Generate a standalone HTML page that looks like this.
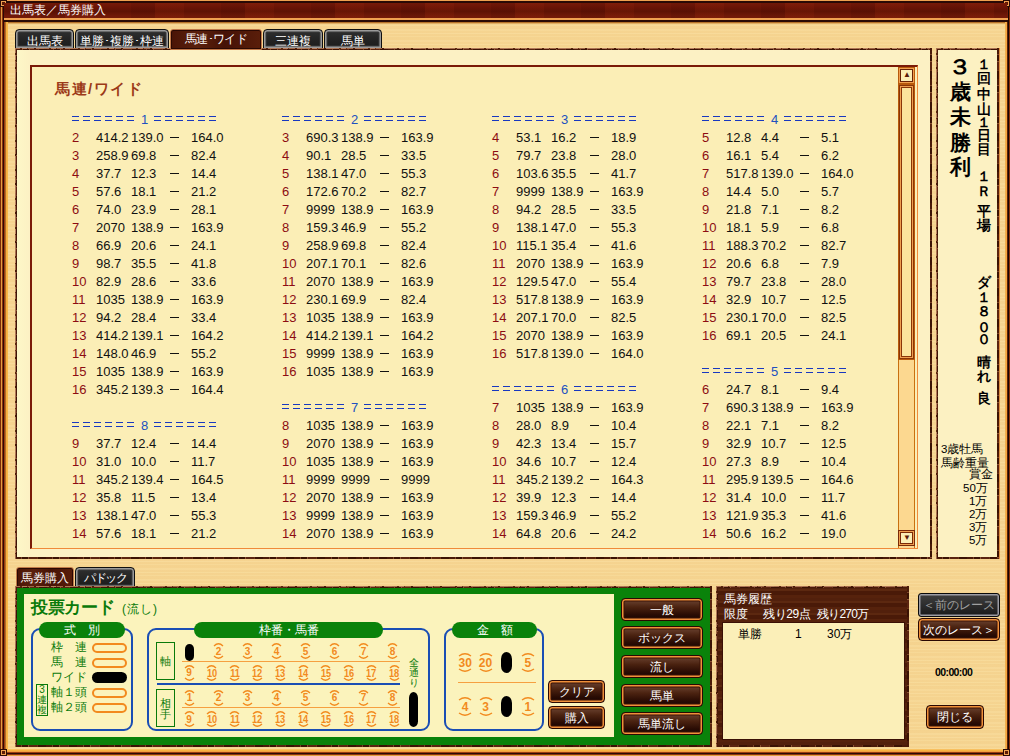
<!DOCTYPE html><html><head><meta charset="utf-8"><style>
*{margin:0;padding:0;box-sizing:border-box}
html,body{width:1010px;height:756px;overflow:hidden}
body{position:relative;font-family:"Liberation Sans",sans-serif;font-size:12px;background:#F6D48E}
.a{position:absolute}
.wood{background:
 repeating-linear-gradient(180deg, rgba(255,240,185,.20) 0 1px, rgba(236,196,120,.10) 1px 3px, rgba(255,236,175,.16) 3px 4px, rgba(234,192,115,.10) 4px 7px, rgba(255,242,190,.12) 7px 9px, rgba(238,198,122,.08) 9px 11px),
 #F6D592}
.tx{white-space:pre;line-height:1}
.t13{font-size:13px}
.tabs{background:linear-gradient(#303030,#222 60%,#1c1c1c);border:1px solid #101010;box-shadow:inset 0 0 0 1.5px #9a9a9a, inset 0 0 0 2.5px #3a3a3a;border-radius:4px 4px 0 0;color:#fff}
.taba{background:linear-gradient(90deg,#4a1406,#5a200c 30%,#461206 60%,#5a1e0a);border:1px solid #c07848;box-shadow:inset 0 0 0 1px #2a0802;border-radius:3px 3px 0 0;color:#fff}
.rough{border:2px solid #5a2a12}
.btn{background:linear-gradient(180deg,#6e4634 0%,#4a2210 40%,#2a0c04 75%,#160402 100%);border:1px solid #2a0802;box-shadow:inset 0 0 0 1.5px #f0903a, inset 0 0 0 2.5px #3a1206;border-radius:4px;color:#fff}
.g{color:#0a780a}
</style></head><body>
<div class="a wood" style="left:0;top:0;width:1010px;height:756px"></div>
<div class="a" style="left:0px;top:0px;width:1010px;height:24px;background:linear-gradient(180deg,#F0A050 0,#F0A050 1px,#2a0a05 1px,#2a0a05 3px,#7a1c08 3px,#6e1606 10px,#7a1e08 18px,#F0A050 18px,#F0A050 20px,#2a0a05 20px,#2a0a05 22px,#a85e1a 22px,#c88838 23px,#F6D592 24px)"></div>
<div class="a" style="left:0px;top:6px;width:1px;height:750px;background:#7a2a0a"></div>
<div class="a" style="left:1px;top:6px;width:1px;height:750px;background:#e0a040"></div>
<div class="a" style="left:2px;top:6px;width:1px;height:750px;background:#8b3010"></div>
<div class="a" style="left:3px;top:6px;width:1px;height:750px;background:#2a0a05"></div>
<div class="a" style="left:4px;top:22px;width:1px;height:734px;background:#9a3a10"></div>
<div class="a" style="left:5px;top:22px;width:1px;height:734px;background:#b07028"></div>
<div class="a" style="left:6px;top:22px;width:1px;height:734px;background:#f8b040"></div>
<div class="a" style="left:7px;top:22px;width:1px;height:734px;background:#f8b848"></div>
<div class="a" style="left:1009px;top:7px;width:1px;height:749px;background:#8a3008"></div>
<div class="a" style="left:1008px;top:7px;width:1px;height:749px;background:#1a0602"></div>
<div class="a" style="left:1007px;top:22px;width:1px;height:734px;background:#5a2008"></div>
<div class="a" style="left:1006px;top:22px;width:1px;height:734px;background:#f8a840"></div>
<div class="a" style="left:1005px;top:22px;width:1px;height:734px;background:#f0b050"></div>
<div class="a" style="left:0px;top:749px;width:1010px;height:1px;background:#f8c060"></div>
<div class="a" style="left:0px;top:750px;width:1010px;height:1px;background:#f8b040"></div>
<div class="a" style="left:0px;top:751px;width:1010px;height:1px;background:#f0a040"></div>
<div class="a" style="left:0px;top:752px;width:1010px;height:1px;background:#9a3a10"></div>
<div class="a" style="left:0px;top:753px;width:1010px;height:1px;background:#2a0a05"></div>
<div class="a" style="left:0px;top:754px;width:1010px;height:1px;background:#8b3010"></div>
<div class="a" style="left:0px;top:755px;width:1010px;height:1px;background:#e0a040"></div>
<div class="a" style="left:0px;top:0px;width:7px;height:7px;background:#5a1a06;border:1px solid #2a0a05;box-shadow:inset 0 0 0 1px #f0a050"></div>
<div class="a" style="left:1003px;top:0px;width:7px;height:7px;background:#5a1a06;border:1px solid #2a0a05;box-shadow:inset 0 0 0 1px #f0a050"></div>
<div class="a" style="left:0px;top:749px;width:7px;height:7px;background:#5a1a06;border:1px solid #2a0a05;box-shadow:inset 0 0 0 1px #f0a050"></div>
<div class="a" style="left:1003px;top:749px;width:7px;height:7px;background:#5a1a06;border:1px solid #2a0a05;box-shadow:inset 0 0 0 1px #f0a050"></div>
<div class="a" style="left:4px;top:3px;width:1003px;height:15px;background:repeating-linear-gradient(90deg,rgba(0,0,0,0) 0 37px,rgba(40,0,0,.10) 37px 61px,rgba(255,80,20,.06) 61px 90px),linear-gradient(180deg,#781a08,#6a1406 30%,#5e1204 55%,#701808 85%,#741a08)"></div>
<div class="a tx" style="left:10px;top:4px;color:#fff;font-size:12px">出馬表／馬券購入</div>
<div class="a tabs" style="left:15px;top:29px;width:59px;height:20px"><div class="tx" style="position:absolute;left:0;right:0;top:5px;text-align:center;font-size:12px">出馬表</div></div>
<div class="a tabs" style="left:75px;top:29px;width:94px;height:20px"><div class="tx" style="position:absolute;left:0;right:0;top:5px;text-align:center;font-size:12px">単勝･複勝･枠連</div></div>
<div class="a tabs" style="left:263px;top:29px;width:60px;height:20px"><div class="tx" style="position:absolute;left:0;right:0;top:5px;text-align:center;font-size:12px">三連複</div></div>
<div class="a tabs" style="left:324px;top:29px;width:58px;height:20px"><div class="tx" style="position:absolute;left:0;right:0;top:5px;text-align:center;font-size:12px">馬単</div></div>
<div class="a" style="left:15px;top:48px;width:917px;height:511px;background:linear-gradient(90deg,#FDF8C8 0,#FCF1C4 14px);"></div>
<div class="a" style="left:15px;top:48px;width:917px;height:1px;background:repeating-linear-gradient(90deg,#a87050 0 5px,#5a2a10 5px 7px,#b88060 7px 12px,#6a3418 12px 13px,#a06848 13px 19px,#4a1a08 19px 21px,#b07858 21px 29px)"></div>
<div class="a" style="left:16px;top:49px;width:915px;height:1px;background:repeating-linear-gradient(90deg,#4a1a08 0 6px,#7a4428 6px 7px,#3a1204 7px 13px,#8a5434 13px 14px,#5a2410 14px 22px,#6a3418 22px 23px,#3a1204 23px 31px)"></div>
<div class="a" style="left:15px;top:557px;width:917px;height:2px;background:repeating-linear-gradient(90deg,#4a1a08 0 6px,#7a4428 6px 7px,#3a1204 7px 13px,#8a5434 13px 14px,#5a2410 14px 22px,#6a3418 22px 23px,#3a1204 23px 31px)"></div>
<div class="a" style="left:15px;top:48px;width:1px;height:511px;background:repeating-linear-gradient(180deg,#a87050 0 5px,#5a2a10 5px 7px,#b88060 7px 12px,#6a3418 12px 13px,#a06848 13px 19px,#4a1a08 19px 21px,#b07858 21px 29px)"></div>
<div class="a" style="left:16px;top:49px;width:1px;height:509px;background:repeating-linear-gradient(180deg,#4a1a08 0 6px,#7a4428 6px 7px,#3a1204 7px 13px,#8a5434 13px 14px,#5a2410 14px 22px,#6a3418 22px 23px,#3a1204 23px 31px)"></div>
<div class="a" style="left:930px;top:48px;width:2px;height:511px;background:repeating-linear-gradient(180deg,#4a1a08 0 6px,#7a4428 6px 7px,#3a1204 7px 13px,#8a5434 13px 14px,#5a2410 14px 22px,#6a3418 22px 23px,#3a1204 23px 31px)"></div>
<div class="a" style="left:30px;top:65px;width:888px;height:484px;background:#FBEEB6;border-left:2px solid #7a1a08;border-top:2px solid #7a1a08;border-bottom:1px solid #f08a3a;border-right:1px solid #f08a3a"></div>
<div class="a tx" style="left:55px;top:81px;color:#9c3a18;font-size:15px;font-weight:bold;letter-spacing:1.5px">馬連/ワイド</div>
<div class="a taba" style="left:170px;top:29px;width:92px;height:21px"><div class="tx" style="position:absolute;left:0;right:0;top:3px;text-align:center;font-size:12px;letter-spacing:-0.6px">馬連･ワイド</div></div>
<div class="a" style="left:898px;top:67px;width:17px;height:481px;background:#FCD890;border-left:1px solid #c87010;border-right:1px solid #c87010"></div>
<div class="a" style="left:898px;top:67px;width:17px;height:17px;background:#b85a0c"></div>
<div class="a" style="left:900px;top:69px;width:13px;height:13px;background:#FBEEB6;border:1px solid #6a2206;box-shadow:0 0 0 1px #f0a050"></div>
<div class="a" style="left:898px;top:84px;width:17px;height:276px;background:#b85a0c"></div>
<div class="a" style="left:899px;top:85px;width:15px;height:274px;background:#FCE49C;border:1px solid #8a3608;box-shadow:inset 0 0 0 1px #f0a050, inset 0 0 0 2px #8a3608"></div>
<div class="a" style="left:898px;top:530px;width:17px;height:16px;background:#7a2a08"></div>
<div class="a" style="left:900px;top:532px;width:13px;height:12px;background:#FBEEB6;border:1px solid #7a2a08;box-shadow:0 0 0 1px #f0a050"></div>
<div class="a tx" style="left:903px;top:71px;font-size:8px;color:#5a1a08">▲</div>
<div class="a tx" style="left:903px;top:534px;font-size:8px;color:#5a1a08">▼</div>
<div class="a" style="left:32px;top:67px;width:865px;height:480px;overflow:hidden">
<div class="a" style="left:40px;top:49.0px;width:7px;height:5px;border-top:1px solid #1838c0;border-bottom:1px solid #1838c0"></div>
<div class="a" style="left:121.5px;top:49.0px;width:7px;height:5px;border-top:1px solid #1838c0;border-bottom:1px solid #1838c0"></div>
<div class="a" style="left:51px;top:49.0px;width:7px;height:5px;border-top:1px solid #1838c0;border-bottom:1px solid #1838c0"></div>
<div class="a" style="left:132.5px;top:49.0px;width:7px;height:5px;border-top:1px solid #1838c0;border-bottom:1px solid #1838c0"></div>
<div class="a" style="left:62px;top:49.0px;width:7px;height:5px;border-top:1px solid #1838c0;border-bottom:1px solid #1838c0"></div>
<div class="a" style="left:143.5px;top:49.0px;width:7px;height:5px;border-top:1px solid #1838c0;border-bottom:1px solid #1838c0"></div>
<div class="a" style="left:73px;top:49.0px;width:7px;height:5px;border-top:1px solid #1838c0;border-bottom:1px solid #1838c0"></div>
<div class="a" style="left:154.5px;top:49.0px;width:7px;height:5px;border-top:1px solid #1838c0;border-bottom:1px solid #1838c0"></div>
<div class="a" style="left:84px;top:49.0px;width:7px;height:5px;border-top:1px solid #1838c0;border-bottom:1px solid #1838c0"></div>
<div class="a" style="left:165.5px;top:49.0px;width:7px;height:5px;border-top:1px solid #1838c0;border-bottom:1px solid #1838c0"></div>
<div class="a" style="left:95px;top:49.0px;width:7px;height:5px;border-top:1px solid #1838c0;border-bottom:1px solid #1838c0"></div>
<div class="a" style="left:176.5px;top:49.0px;width:7px;height:5px;border-top:1px solid #1838c0;border-bottom:1px solid #1838c0"></div>
<div class="a tx" style="left:109px;top:45.5px;color:#2050c0;font-size:13px">1</div>
<div class="a tx t13" style="left:40px;top:63.5px;color:#8c0c12">2</div>
<div class="a tx t13" style="left:64px;top:63.5px;color:#111">414.2</div>
<div class="a tx t13" style="left:99px;top:63.5px;color:#111">139.0</div>
<div class="a" style="left:138px;top:69.5px;width:9px;height:1px;background:#111"></div>
<div class="a tx t13" style="left:159px;top:63.5px;color:#111">164.0</div>
<div class="a tx t13" style="left:40px;top:81.5px;color:#8c0c12">3</div>
<div class="a tx t13" style="left:64px;top:81.5px;color:#111">258.9</div>
<div class="a tx t13" style="left:99px;top:81.5px;color:#111">69.8</div>
<div class="a" style="left:138px;top:87.5px;width:9px;height:1px;background:#111"></div>
<div class="a tx t13" style="left:159px;top:81.5px;color:#111">82.4</div>
<div class="a tx t13" style="left:40px;top:99.5px;color:#8c0c12">4</div>
<div class="a tx t13" style="left:64px;top:99.5px;color:#111">37.7</div>
<div class="a tx t13" style="left:99px;top:99.5px;color:#111">12.3</div>
<div class="a" style="left:138px;top:105.5px;width:9px;height:1px;background:#111"></div>
<div class="a tx t13" style="left:159px;top:99.5px;color:#111">14.4</div>
<div class="a tx t13" style="left:40px;top:117.5px;color:#8c0c12">5</div>
<div class="a tx t13" style="left:64px;top:117.5px;color:#111">57.6</div>
<div class="a tx t13" style="left:99px;top:117.5px;color:#111">18.1</div>
<div class="a" style="left:138px;top:123.5px;width:9px;height:1px;background:#111"></div>
<div class="a tx t13" style="left:159px;top:117.5px;color:#111">21.2</div>
<div class="a tx t13" style="left:40px;top:135.5px;color:#8c0c12">6</div>
<div class="a tx t13" style="left:64px;top:135.5px;color:#111">74.0</div>
<div class="a tx t13" style="left:99px;top:135.5px;color:#111">23.9</div>
<div class="a" style="left:138px;top:141.5px;width:9px;height:1px;background:#111"></div>
<div class="a tx t13" style="left:159px;top:135.5px;color:#111">28.1</div>
<div class="a tx t13" style="left:40px;top:153.5px;color:#8c0c12">7</div>
<div class="a tx t13" style="left:64px;top:153.5px;color:#111">2070</div>
<div class="a tx t13" style="left:99px;top:153.5px;color:#111">138.9</div>
<div class="a" style="left:138px;top:159.5px;width:9px;height:1px;background:#111"></div>
<div class="a tx t13" style="left:159px;top:153.5px;color:#111">163.9</div>
<div class="a tx t13" style="left:40px;top:171.5px;color:#8c0c12">8</div>
<div class="a tx t13" style="left:64px;top:171.5px;color:#111">66.9</div>
<div class="a tx t13" style="left:99px;top:171.5px;color:#111">20.6</div>
<div class="a" style="left:138px;top:177.5px;width:9px;height:1px;background:#111"></div>
<div class="a tx t13" style="left:159px;top:171.5px;color:#111">24.1</div>
<div class="a tx t13" style="left:40px;top:189.5px;color:#8c0c12">9</div>
<div class="a tx t13" style="left:64px;top:189.5px;color:#111">98.7</div>
<div class="a tx t13" style="left:99px;top:189.5px;color:#111">35.5</div>
<div class="a" style="left:138px;top:195.5px;width:9px;height:1px;background:#111"></div>
<div class="a tx t13" style="left:159px;top:189.5px;color:#111">41.8</div>
<div class="a tx t13" style="left:40px;top:207.5px;color:#8c0c12">10</div>
<div class="a tx t13" style="left:64px;top:207.5px;color:#111">82.9</div>
<div class="a tx t13" style="left:99px;top:207.5px;color:#111">28.6</div>
<div class="a" style="left:138px;top:213.5px;width:9px;height:1px;background:#111"></div>
<div class="a tx t13" style="left:159px;top:207.5px;color:#111">33.6</div>
<div class="a tx t13" style="left:40px;top:225.5px;color:#8c0c12">11</div>
<div class="a tx t13" style="left:64px;top:225.5px;color:#111">1035</div>
<div class="a tx t13" style="left:99px;top:225.5px;color:#111">138.9</div>
<div class="a" style="left:138px;top:231.5px;width:9px;height:1px;background:#111"></div>
<div class="a tx t13" style="left:159px;top:225.5px;color:#111">163.9</div>
<div class="a tx t13" style="left:40px;top:243.5px;color:#8c0c12">12</div>
<div class="a tx t13" style="left:64px;top:243.5px;color:#111">94.2</div>
<div class="a tx t13" style="left:99px;top:243.5px;color:#111">28.4</div>
<div class="a" style="left:138px;top:249.5px;width:9px;height:1px;background:#111"></div>
<div class="a tx t13" style="left:159px;top:243.5px;color:#111">33.4</div>
<div class="a tx t13" style="left:40px;top:261.5px;color:#8c0c12">13</div>
<div class="a tx t13" style="left:64px;top:261.5px;color:#111">414.2</div>
<div class="a tx t13" style="left:99px;top:261.5px;color:#111">139.1</div>
<div class="a" style="left:138px;top:267.5px;width:9px;height:1px;background:#111"></div>
<div class="a tx t13" style="left:159px;top:261.5px;color:#111">164.2</div>
<div class="a tx t13" style="left:40px;top:279.5px;color:#8c0c12">14</div>
<div class="a tx t13" style="left:64px;top:279.5px;color:#111">148.0</div>
<div class="a tx t13" style="left:99px;top:279.5px;color:#111">46.9</div>
<div class="a" style="left:138px;top:285.5px;width:9px;height:1px;background:#111"></div>
<div class="a tx t13" style="left:159px;top:279.5px;color:#111">55.2</div>
<div class="a tx t13" style="left:40px;top:297.5px;color:#8c0c12">15</div>
<div class="a tx t13" style="left:64px;top:297.5px;color:#111">1035</div>
<div class="a tx t13" style="left:99px;top:297.5px;color:#111">138.9</div>
<div class="a" style="left:138px;top:303.5px;width:9px;height:1px;background:#111"></div>
<div class="a tx t13" style="left:159px;top:297.5px;color:#111">163.9</div>
<div class="a tx t13" style="left:40px;top:315.5px;color:#8c0c12">16</div>
<div class="a tx t13" style="left:64px;top:315.5px;color:#111">345.2</div>
<div class="a tx t13" style="left:99px;top:315.5px;color:#111">139.3</div>
<div class="a" style="left:138px;top:321.5px;width:9px;height:1px;background:#111"></div>
<div class="a tx t13" style="left:159px;top:315.5px;color:#111">164.4</div>
<div class="a" style="left:40px;top:355.0px;width:7px;height:5px;border-top:1px solid #1838c0;border-bottom:1px solid #1838c0"></div>
<div class="a" style="left:121.5px;top:355.0px;width:7px;height:5px;border-top:1px solid #1838c0;border-bottom:1px solid #1838c0"></div>
<div class="a" style="left:51px;top:355.0px;width:7px;height:5px;border-top:1px solid #1838c0;border-bottom:1px solid #1838c0"></div>
<div class="a" style="left:132.5px;top:355.0px;width:7px;height:5px;border-top:1px solid #1838c0;border-bottom:1px solid #1838c0"></div>
<div class="a" style="left:62px;top:355.0px;width:7px;height:5px;border-top:1px solid #1838c0;border-bottom:1px solid #1838c0"></div>
<div class="a" style="left:143.5px;top:355.0px;width:7px;height:5px;border-top:1px solid #1838c0;border-bottom:1px solid #1838c0"></div>
<div class="a" style="left:73px;top:355.0px;width:7px;height:5px;border-top:1px solid #1838c0;border-bottom:1px solid #1838c0"></div>
<div class="a" style="left:154.5px;top:355.0px;width:7px;height:5px;border-top:1px solid #1838c0;border-bottom:1px solid #1838c0"></div>
<div class="a" style="left:84px;top:355.0px;width:7px;height:5px;border-top:1px solid #1838c0;border-bottom:1px solid #1838c0"></div>
<div class="a" style="left:165.5px;top:355.0px;width:7px;height:5px;border-top:1px solid #1838c0;border-bottom:1px solid #1838c0"></div>
<div class="a" style="left:95px;top:355.0px;width:7px;height:5px;border-top:1px solid #1838c0;border-bottom:1px solid #1838c0"></div>
<div class="a" style="left:176.5px;top:355.0px;width:7px;height:5px;border-top:1px solid #1838c0;border-bottom:1px solid #1838c0"></div>
<div class="a tx" style="left:109px;top:351.5px;color:#2050c0;font-size:13px">8</div>
<div class="a tx t13" style="left:40px;top:369.5px;color:#8c0c12">9</div>
<div class="a tx t13" style="left:64px;top:369.5px;color:#111">37.7</div>
<div class="a tx t13" style="left:99px;top:369.5px;color:#111">12.4</div>
<div class="a" style="left:138px;top:375.5px;width:9px;height:1px;background:#111"></div>
<div class="a tx t13" style="left:159px;top:369.5px;color:#111">14.4</div>
<div class="a tx t13" style="left:40px;top:387.5px;color:#8c0c12">10</div>
<div class="a tx t13" style="left:64px;top:387.5px;color:#111">31.0</div>
<div class="a tx t13" style="left:99px;top:387.5px;color:#111">10.0</div>
<div class="a" style="left:138px;top:393.5px;width:9px;height:1px;background:#111"></div>
<div class="a tx t13" style="left:159px;top:387.5px;color:#111">11.7</div>
<div class="a tx t13" style="left:40px;top:405.5px;color:#8c0c12">11</div>
<div class="a tx t13" style="left:64px;top:405.5px;color:#111">345.2</div>
<div class="a tx t13" style="left:99px;top:405.5px;color:#111">139.4</div>
<div class="a" style="left:138px;top:411.5px;width:9px;height:1px;background:#111"></div>
<div class="a tx t13" style="left:159px;top:405.5px;color:#111">164.5</div>
<div class="a tx t13" style="left:40px;top:423.5px;color:#8c0c12">12</div>
<div class="a tx t13" style="left:64px;top:423.5px;color:#111">35.8</div>
<div class="a tx t13" style="left:99px;top:423.5px;color:#111">11.5</div>
<div class="a" style="left:138px;top:429.5px;width:9px;height:1px;background:#111"></div>
<div class="a tx t13" style="left:159px;top:423.5px;color:#111">13.4</div>
<div class="a tx t13" style="left:40px;top:441.5px;color:#8c0c12">13</div>
<div class="a tx t13" style="left:64px;top:441.5px;color:#111">138.1</div>
<div class="a tx t13" style="left:99px;top:441.5px;color:#111">47.0</div>
<div class="a" style="left:138px;top:447.5px;width:9px;height:1px;background:#111"></div>
<div class="a tx t13" style="left:159px;top:441.5px;color:#111">55.3</div>
<div class="a tx t13" style="left:40px;top:459.5px;color:#8c0c12">14</div>
<div class="a tx t13" style="left:64px;top:459.5px;color:#111">57.6</div>
<div class="a tx t13" style="left:99px;top:459.5px;color:#111">18.1</div>
<div class="a" style="left:138px;top:465.5px;width:9px;height:1px;background:#111"></div>
<div class="a tx t13" style="left:159px;top:459.5px;color:#111">21.2</div>
<div class="a tx t13" style="left:40px;top:477.5px;color:#8c0c12">15</div>
<div class="a tx t13" style="left:64px;top:477.5px;color:#111">414.2</div>
<div class="a tx t13" style="left:99px;top:477.5px;color:#111">139.1</div>
<div class="a" style="left:138px;top:483.5px;width:9px;height:1px;background:#111"></div>
<div class="a tx t13" style="left:159px;top:477.5px;color:#111">164.2</div>
<div class="a" style="left:250px;top:49.0px;width:7px;height:5px;border-top:1px solid #1838c0;border-bottom:1px solid #1838c0"></div>
<div class="a" style="left:331.5px;top:49.0px;width:7px;height:5px;border-top:1px solid #1838c0;border-bottom:1px solid #1838c0"></div>
<div class="a" style="left:261px;top:49.0px;width:7px;height:5px;border-top:1px solid #1838c0;border-bottom:1px solid #1838c0"></div>
<div class="a" style="left:342.5px;top:49.0px;width:7px;height:5px;border-top:1px solid #1838c0;border-bottom:1px solid #1838c0"></div>
<div class="a" style="left:272px;top:49.0px;width:7px;height:5px;border-top:1px solid #1838c0;border-bottom:1px solid #1838c0"></div>
<div class="a" style="left:353.5px;top:49.0px;width:7px;height:5px;border-top:1px solid #1838c0;border-bottom:1px solid #1838c0"></div>
<div class="a" style="left:283px;top:49.0px;width:7px;height:5px;border-top:1px solid #1838c0;border-bottom:1px solid #1838c0"></div>
<div class="a" style="left:364.5px;top:49.0px;width:7px;height:5px;border-top:1px solid #1838c0;border-bottom:1px solid #1838c0"></div>
<div class="a" style="left:294px;top:49.0px;width:7px;height:5px;border-top:1px solid #1838c0;border-bottom:1px solid #1838c0"></div>
<div class="a" style="left:375.5px;top:49.0px;width:7px;height:5px;border-top:1px solid #1838c0;border-bottom:1px solid #1838c0"></div>
<div class="a" style="left:305px;top:49.0px;width:7px;height:5px;border-top:1px solid #1838c0;border-bottom:1px solid #1838c0"></div>
<div class="a" style="left:386.5px;top:49.0px;width:7px;height:5px;border-top:1px solid #1838c0;border-bottom:1px solid #1838c0"></div>
<div class="a tx" style="left:319px;top:45.5px;color:#2050c0;font-size:13px">2</div>
<div class="a tx t13" style="left:250px;top:63.5px;color:#8c0c12">3</div>
<div class="a tx t13" style="left:274px;top:63.5px;color:#111">690.3</div>
<div class="a tx t13" style="left:309px;top:63.5px;color:#111">138.9</div>
<div class="a" style="left:348px;top:69.5px;width:9px;height:1px;background:#111"></div>
<div class="a tx t13" style="left:369px;top:63.5px;color:#111">163.9</div>
<div class="a tx t13" style="left:250px;top:81.5px;color:#8c0c12">4</div>
<div class="a tx t13" style="left:274px;top:81.5px;color:#111">90.1</div>
<div class="a tx t13" style="left:309px;top:81.5px;color:#111">28.5</div>
<div class="a" style="left:348px;top:87.5px;width:9px;height:1px;background:#111"></div>
<div class="a tx t13" style="left:369px;top:81.5px;color:#111">33.5</div>
<div class="a tx t13" style="left:250px;top:99.5px;color:#8c0c12">5</div>
<div class="a tx t13" style="left:274px;top:99.5px;color:#111">138.1</div>
<div class="a tx t13" style="left:309px;top:99.5px;color:#111">47.0</div>
<div class="a" style="left:348px;top:105.5px;width:9px;height:1px;background:#111"></div>
<div class="a tx t13" style="left:369px;top:99.5px;color:#111">55.3</div>
<div class="a tx t13" style="left:250px;top:117.5px;color:#8c0c12">6</div>
<div class="a tx t13" style="left:274px;top:117.5px;color:#111">172.6</div>
<div class="a tx t13" style="left:309px;top:117.5px;color:#111">70.2</div>
<div class="a" style="left:348px;top:123.5px;width:9px;height:1px;background:#111"></div>
<div class="a tx t13" style="left:369px;top:117.5px;color:#111">82.7</div>
<div class="a tx t13" style="left:250px;top:135.5px;color:#8c0c12">7</div>
<div class="a tx t13" style="left:274px;top:135.5px;color:#111">9999</div>
<div class="a tx t13" style="left:309px;top:135.5px;color:#111">138.9</div>
<div class="a" style="left:348px;top:141.5px;width:9px;height:1px;background:#111"></div>
<div class="a tx t13" style="left:369px;top:135.5px;color:#111">163.9</div>
<div class="a tx t13" style="left:250px;top:153.5px;color:#8c0c12">8</div>
<div class="a tx t13" style="left:274px;top:153.5px;color:#111">159.3</div>
<div class="a tx t13" style="left:309px;top:153.5px;color:#111">46.9</div>
<div class="a" style="left:348px;top:159.5px;width:9px;height:1px;background:#111"></div>
<div class="a tx t13" style="left:369px;top:153.5px;color:#111">55.2</div>
<div class="a tx t13" style="left:250px;top:171.5px;color:#8c0c12">9</div>
<div class="a tx t13" style="left:274px;top:171.5px;color:#111">258.9</div>
<div class="a tx t13" style="left:309px;top:171.5px;color:#111">69.8</div>
<div class="a" style="left:348px;top:177.5px;width:9px;height:1px;background:#111"></div>
<div class="a tx t13" style="left:369px;top:171.5px;color:#111">82.4</div>
<div class="a tx t13" style="left:250px;top:189.5px;color:#8c0c12">10</div>
<div class="a tx t13" style="left:274px;top:189.5px;color:#111">207.1</div>
<div class="a tx t13" style="left:309px;top:189.5px;color:#111">70.1</div>
<div class="a" style="left:348px;top:195.5px;width:9px;height:1px;background:#111"></div>
<div class="a tx t13" style="left:369px;top:189.5px;color:#111">82.6</div>
<div class="a tx t13" style="left:250px;top:207.5px;color:#8c0c12">11</div>
<div class="a tx t13" style="left:274px;top:207.5px;color:#111">2070</div>
<div class="a tx t13" style="left:309px;top:207.5px;color:#111">138.9</div>
<div class="a" style="left:348px;top:213.5px;width:9px;height:1px;background:#111"></div>
<div class="a tx t13" style="left:369px;top:207.5px;color:#111">163.9</div>
<div class="a tx t13" style="left:250px;top:225.5px;color:#8c0c12">12</div>
<div class="a tx t13" style="left:274px;top:225.5px;color:#111">230.1</div>
<div class="a tx t13" style="left:309px;top:225.5px;color:#111">69.9</div>
<div class="a" style="left:348px;top:231.5px;width:9px;height:1px;background:#111"></div>
<div class="a tx t13" style="left:369px;top:225.5px;color:#111">82.4</div>
<div class="a tx t13" style="left:250px;top:243.5px;color:#8c0c12">13</div>
<div class="a tx t13" style="left:274px;top:243.5px;color:#111">1035</div>
<div class="a tx t13" style="left:309px;top:243.5px;color:#111">138.9</div>
<div class="a" style="left:348px;top:249.5px;width:9px;height:1px;background:#111"></div>
<div class="a tx t13" style="left:369px;top:243.5px;color:#111">163.9</div>
<div class="a tx t13" style="left:250px;top:261.5px;color:#8c0c12">14</div>
<div class="a tx t13" style="left:274px;top:261.5px;color:#111">414.2</div>
<div class="a tx t13" style="left:309px;top:261.5px;color:#111">139.1</div>
<div class="a" style="left:348px;top:267.5px;width:9px;height:1px;background:#111"></div>
<div class="a tx t13" style="left:369px;top:261.5px;color:#111">164.2</div>
<div class="a tx t13" style="left:250px;top:279.5px;color:#8c0c12">15</div>
<div class="a tx t13" style="left:274px;top:279.5px;color:#111">9999</div>
<div class="a tx t13" style="left:309px;top:279.5px;color:#111">138.9</div>
<div class="a" style="left:348px;top:285.5px;width:9px;height:1px;background:#111"></div>
<div class="a tx t13" style="left:369px;top:279.5px;color:#111">163.9</div>
<div class="a tx t13" style="left:250px;top:297.5px;color:#8c0c12">16</div>
<div class="a tx t13" style="left:274px;top:297.5px;color:#111">1035</div>
<div class="a tx t13" style="left:309px;top:297.5px;color:#111">138.9</div>
<div class="a" style="left:348px;top:303.5px;width:9px;height:1px;background:#111"></div>
<div class="a tx t13" style="left:369px;top:297.5px;color:#111">163.9</div>
<div class="a" style="left:250px;top:337.0px;width:7px;height:5px;border-top:1px solid #1838c0;border-bottom:1px solid #1838c0"></div>
<div class="a" style="left:331.5px;top:337.0px;width:7px;height:5px;border-top:1px solid #1838c0;border-bottom:1px solid #1838c0"></div>
<div class="a" style="left:261px;top:337.0px;width:7px;height:5px;border-top:1px solid #1838c0;border-bottom:1px solid #1838c0"></div>
<div class="a" style="left:342.5px;top:337.0px;width:7px;height:5px;border-top:1px solid #1838c0;border-bottom:1px solid #1838c0"></div>
<div class="a" style="left:272px;top:337.0px;width:7px;height:5px;border-top:1px solid #1838c0;border-bottom:1px solid #1838c0"></div>
<div class="a" style="left:353.5px;top:337.0px;width:7px;height:5px;border-top:1px solid #1838c0;border-bottom:1px solid #1838c0"></div>
<div class="a" style="left:283px;top:337.0px;width:7px;height:5px;border-top:1px solid #1838c0;border-bottom:1px solid #1838c0"></div>
<div class="a" style="left:364.5px;top:337.0px;width:7px;height:5px;border-top:1px solid #1838c0;border-bottom:1px solid #1838c0"></div>
<div class="a" style="left:294px;top:337.0px;width:7px;height:5px;border-top:1px solid #1838c0;border-bottom:1px solid #1838c0"></div>
<div class="a" style="left:375.5px;top:337.0px;width:7px;height:5px;border-top:1px solid #1838c0;border-bottom:1px solid #1838c0"></div>
<div class="a" style="left:305px;top:337.0px;width:7px;height:5px;border-top:1px solid #1838c0;border-bottom:1px solid #1838c0"></div>
<div class="a" style="left:386.5px;top:337.0px;width:7px;height:5px;border-top:1px solid #1838c0;border-bottom:1px solid #1838c0"></div>
<div class="a tx" style="left:319px;top:333.5px;color:#2050c0;font-size:13px">7</div>
<div class="a tx t13" style="left:250px;top:351.5px;color:#8c0c12">8</div>
<div class="a tx t13" style="left:274px;top:351.5px;color:#111">1035</div>
<div class="a tx t13" style="left:309px;top:351.5px;color:#111">138.9</div>
<div class="a" style="left:348px;top:357.5px;width:9px;height:1px;background:#111"></div>
<div class="a tx t13" style="left:369px;top:351.5px;color:#111">163.9</div>
<div class="a tx t13" style="left:250px;top:369.5px;color:#8c0c12">9</div>
<div class="a tx t13" style="left:274px;top:369.5px;color:#111">2070</div>
<div class="a tx t13" style="left:309px;top:369.5px;color:#111">138.9</div>
<div class="a" style="left:348px;top:375.5px;width:9px;height:1px;background:#111"></div>
<div class="a tx t13" style="left:369px;top:369.5px;color:#111">163.9</div>
<div class="a tx t13" style="left:250px;top:387.5px;color:#8c0c12">10</div>
<div class="a tx t13" style="left:274px;top:387.5px;color:#111">1035</div>
<div class="a tx t13" style="left:309px;top:387.5px;color:#111">138.9</div>
<div class="a" style="left:348px;top:393.5px;width:9px;height:1px;background:#111"></div>
<div class="a tx t13" style="left:369px;top:387.5px;color:#111">163.9</div>
<div class="a tx t13" style="left:250px;top:405.5px;color:#8c0c12">11</div>
<div class="a tx t13" style="left:274px;top:405.5px;color:#111">9999</div>
<div class="a tx t13" style="left:309px;top:405.5px;color:#111">9999</div>
<div class="a" style="left:348px;top:411.5px;width:9px;height:1px;background:#111"></div>
<div class="a tx t13" style="left:369px;top:405.5px;color:#111">9999</div>
<div class="a tx t13" style="left:250px;top:423.5px;color:#8c0c12">12</div>
<div class="a tx t13" style="left:274px;top:423.5px;color:#111">2070</div>
<div class="a tx t13" style="left:309px;top:423.5px;color:#111">138.9</div>
<div class="a" style="left:348px;top:429.5px;width:9px;height:1px;background:#111"></div>
<div class="a tx t13" style="left:369px;top:423.5px;color:#111">163.9</div>
<div class="a tx t13" style="left:250px;top:441.5px;color:#8c0c12">13</div>
<div class="a tx t13" style="left:274px;top:441.5px;color:#111">9999</div>
<div class="a tx t13" style="left:309px;top:441.5px;color:#111">138.9</div>
<div class="a" style="left:348px;top:447.5px;width:9px;height:1px;background:#111"></div>
<div class="a tx t13" style="left:369px;top:441.5px;color:#111">163.9</div>
<div class="a tx t13" style="left:250px;top:459.5px;color:#8c0c12">14</div>
<div class="a tx t13" style="left:274px;top:459.5px;color:#111">2070</div>
<div class="a tx t13" style="left:309px;top:459.5px;color:#111">138.9</div>
<div class="a" style="left:348px;top:465.5px;width:9px;height:1px;background:#111"></div>
<div class="a tx t13" style="left:369px;top:459.5px;color:#111">163.9</div>
<div class="a tx t13" style="left:250px;top:477.5px;color:#8c0c12">15</div>
<div class="a tx t13" style="left:274px;top:477.5px;color:#111">9999</div>
<div class="a tx t13" style="left:309px;top:477.5px;color:#111">9999</div>
<div class="a" style="left:348px;top:483.5px;width:9px;height:1px;background:#111"></div>
<div class="a tx t13" style="left:369px;top:477.5px;color:#111">9999</div>
<div class="a" style="left:460px;top:49.0px;width:7px;height:5px;border-top:1px solid #1838c0;border-bottom:1px solid #1838c0"></div>
<div class="a" style="left:541.5px;top:49.0px;width:7px;height:5px;border-top:1px solid #1838c0;border-bottom:1px solid #1838c0"></div>
<div class="a" style="left:471px;top:49.0px;width:7px;height:5px;border-top:1px solid #1838c0;border-bottom:1px solid #1838c0"></div>
<div class="a" style="left:552.5px;top:49.0px;width:7px;height:5px;border-top:1px solid #1838c0;border-bottom:1px solid #1838c0"></div>
<div class="a" style="left:482px;top:49.0px;width:7px;height:5px;border-top:1px solid #1838c0;border-bottom:1px solid #1838c0"></div>
<div class="a" style="left:563.5px;top:49.0px;width:7px;height:5px;border-top:1px solid #1838c0;border-bottom:1px solid #1838c0"></div>
<div class="a" style="left:493px;top:49.0px;width:7px;height:5px;border-top:1px solid #1838c0;border-bottom:1px solid #1838c0"></div>
<div class="a" style="left:574.5px;top:49.0px;width:7px;height:5px;border-top:1px solid #1838c0;border-bottom:1px solid #1838c0"></div>
<div class="a" style="left:504px;top:49.0px;width:7px;height:5px;border-top:1px solid #1838c0;border-bottom:1px solid #1838c0"></div>
<div class="a" style="left:585.5px;top:49.0px;width:7px;height:5px;border-top:1px solid #1838c0;border-bottom:1px solid #1838c0"></div>
<div class="a" style="left:515px;top:49.0px;width:7px;height:5px;border-top:1px solid #1838c0;border-bottom:1px solid #1838c0"></div>
<div class="a" style="left:596.5px;top:49.0px;width:7px;height:5px;border-top:1px solid #1838c0;border-bottom:1px solid #1838c0"></div>
<div class="a tx" style="left:529px;top:45.5px;color:#2050c0;font-size:13px">3</div>
<div class="a tx t13" style="left:460px;top:63.5px;color:#8c0c12">4</div>
<div class="a tx t13" style="left:484px;top:63.5px;color:#111">53.1</div>
<div class="a tx t13" style="left:519px;top:63.5px;color:#111">16.2</div>
<div class="a" style="left:558px;top:69.5px;width:9px;height:1px;background:#111"></div>
<div class="a tx t13" style="left:579px;top:63.5px;color:#111">18.9</div>
<div class="a tx t13" style="left:460px;top:81.5px;color:#8c0c12">5</div>
<div class="a tx t13" style="left:484px;top:81.5px;color:#111">79.7</div>
<div class="a tx t13" style="left:519px;top:81.5px;color:#111">23.8</div>
<div class="a" style="left:558px;top:87.5px;width:9px;height:1px;background:#111"></div>
<div class="a tx t13" style="left:579px;top:81.5px;color:#111">28.0</div>
<div class="a tx t13" style="left:460px;top:99.5px;color:#8c0c12">6</div>
<div class="a tx t13" style="left:484px;top:99.5px;color:#111">103.6</div>
<div class="a tx t13" style="left:519px;top:99.5px;color:#111">35.5</div>
<div class="a" style="left:558px;top:105.5px;width:9px;height:1px;background:#111"></div>
<div class="a tx t13" style="left:579px;top:99.5px;color:#111">41.7</div>
<div class="a tx t13" style="left:460px;top:117.5px;color:#8c0c12">7</div>
<div class="a tx t13" style="left:484px;top:117.5px;color:#111">9999</div>
<div class="a tx t13" style="left:519px;top:117.5px;color:#111">138.9</div>
<div class="a" style="left:558px;top:123.5px;width:9px;height:1px;background:#111"></div>
<div class="a tx t13" style="left:579px;top:117.5px;color:#111">163.9</div>
<div class="a tx t13" style="left:460px;top:135.5px;color:#8c0c12">8</div>
<div class="a tx t13" style="left:484px;top:135.5px;color:#111">94.2</div>
<div class="a tx t13" style="left:519px;top:135.5px;color:#111">28.5</div>
<div class="a" style="left:558px;top:141.5px;width:9px;height:1px;background:#111"></div>
<div class="a tx t13" style="left:579px;top:135.5px;color:#111">33.5</div>
<div class="a tx t13" style="left:460px;top:153.5px;color:#8c0c12">9</div>
<div class="a tx t13" style="left:484px;top:153.5px;color:#111">138.1</div>
<div class="a tx t13" style="left:519px;top:153.5px;color:#111">47.0</div>
<div class="a" style="left:558px;top:159.5px;width:9px;height:1px;background:#111"></div>
<div class="a tx t13" style="left:579px;top:153.5px;color:#111">55.3</div>
<div class="a tx t13" style="left:460px;top:171.5px;color:#8c0c12">10</div>
<div class="a tx t13" style="left:484px;top:171.5px;color:#111">115.1</div>
<div class="a tx t13" style="left:519px;top:171.5px;color:#111">35.4</div>
<div class="a" style="left:558px;top:177.5px;width:9px;height:1px;background:#111"></div>
<div class="a tx t13" style="left:579px;top:171.5px;color:#111">41.6</div>
<div class="a tx t13" style="left:460px;top:189.5px;color:#8c0c12">11</div>
<div class="a tx t13" style="left:484px;top:189.5px;color:#111">2070</div>
<div class="a tx t13" style="left:519px;top:189.5px;color:#111">138.9</div>
<div class="a" style="left:558px;top:195.5px;width:9px;height:1px;background:#111"></div>
<div class="a tx t13" style="left:579px;top:189.5px;color:#111">163.9</div>
<div class="a tx t13" style="left:460px;top:207.5px;color:#8c0c12">12</div>
<div class="a tx t13" style="left:484px;top:207.5px;color:#111">129.5</div>
<div class="a tx t13" style="left:519px;top:207.5px;color:#111">47.0</div>
<div class="a" style="left:558px;top:213.5px;width:9px;height:1px;background:#111"></div>
<div class="a tx t13" style="left:579px;top:207.5px;color:#111">55.4</div>
<div class="a tx t13" style="left:460px;top:225.5px;color:#8c0c12">13</div>
<div class="a tx t13" style="left:484px;top:225.5px;color:#111">517.8</div>
<div class="a tx t13" style="left:519px;top:225.5px;color:#111">138.9</div>
<div class="a" style="left:558px;top:231.5px;width:9px;height:1px;background:#111"></div>
<div class="a tx t13" style="left:579px;top:225.5px;color:#111">163.9</div>
<div class="a tx t13" style="left:460px;top:243.5px;color:#8c0c12">14</div>
<div class="a tx t13" style="left:484px;top:243.5px;color:#111">207.1</div>
<div class="a tx t13" style="left:519px;top:243.5px;color:#111">70.0</div>
<div class="a" style="left:558px;top:249.5px;width:9px;height:1px;background:#111"></div>
<div class="a tx t13" style="left:579px;top:243.5px;color:#111">82.5</div>
<div class="a tx t13" style="left:460px;top:261.5px;color:#8c0c12">15</div>
<div class="a tx t13" style="left:484px;top:261.5px;color:#111">2070</div>
<div class="a tx t13" style="left:519px;top:261.5px;color:#111">138.9</div>
<div class="a" style="left:558px;top:267.5px;width:9px;height:1px;background:#111"></div>
<div class="a tx t13" style="left:579px;top:261.5px;color:#111">163.9</div>
<div class="a tx t13" style="left:460px;top:279.5px;color:#8c0c12">16</div>
<div class="a tx t13" style="left:484px;top:279.5px;color:#111">517.8</div>
<div class="a tx t13" style="left:519px;top:279.5px;color:#111">139.0</div>
<div class="a" style="left:558px;top:285.5px;width:9px;height:1px;background:#111"></div>
<div class="a tx t13" style="left:579px;top:279.5px;color:#111">164.0</div>
<div class="a" style="left:460px;top:319.0px;width:7px;height:5px;border-top:1px solid #1838c0;border-bottom:1px solid #1838c0"></div>
<div class="a" style="left:541.5px;top:319.0px;width:7px;height:5px;border-top:1px solid #1838c0;border-bottom:1px solid #1838c0"></div>
<div class="a" style="left:471px;top:319.0px;width:7px;height:5px;border-top:1px solid #1838c0;border-bottom:1px solid #1838c0"></div>
<div class="a" style="left:552.5px;top:319.0px;width:7px;height:5px;border-top:1px solid #1838c0;border-bottom:1px solid #1838c0"></div>
<div class="a" style="left:482px;top:319.0px;width:7px;height:5px;border-top:1px solid #1838c0;border-bottom:1px solid #1838c0"></div>
<div class="a" style="left:563.5px;top:319.0px;width:7px;height:5px;border-top:1px solid #1838c0;border-bottom:1px solid #1838c0"></div>
<div class="a" style="left:493px;top:319.0px;width:7px;height:5px;border-top:1px solid #1838c0;border-bottom:1px solid #1838c0"></div>
<div class="a" style="left:574.5px;top:319.0px;width:7px;height:5px;border-top:1px solid #1838c0;border-bottom:1px solid #1838c0"></div>
<div class="a" style="left:504px;top:319.0px;width:7px;height:5px;border-top:1px solid #1838c0;border-bottom:1px solid #1838c0"></div>
<div class="a" style="left:585.5px;top:319.0px;width:7px;height:5px;border-top:1px solid #1838c0;border-bottom:1px solid #1838c0"></div>
<div class="a" style="left:515px;top:319.0px;width:7px;height:5px;border-top:1px solid #1838c0;border-bottom:1px solid #1838c0"></div>
<div class="a" style="left:596.5px;top:319.0px;width:7px;height:5px;border-top:1px solid #1838c0;border-bottom:1px solid #1838c0"></div>
<div class="a tx" style="left:529px;top:315.5px;color:#2050c0;font-size:13px">6</div>
<div class="a tx t13" style="left:460px;top:333.5px;color:#8c0c12">7</div>
<div class="a tx t13" style="left:484px;top:333.5px;color:#111">1035</div>
<div class="a tx t13" style="left:519px;top:333.5px;color:#111">138.9</div>
<div class="a" style="left:558px;top:339.5px;width:9px;height:1px;background:#111"></div>
<div class="a tx t13" style="left:579px;top:333.5px;color:#111">163.9</div>
<div class="a tx t13" style="left:460px;top:351.5px;color:#8c0c12">8</div>
<div class="a tx t13" style="left:484px;top:351.5px;color:#111">28.0</div>
<div class="a tx t13" style="left:519px;top:351.5px;color:#111">8.9</div>
<div class="a" style="left:558px;top:357.5px;width:9px;height:1px;background:#111"></div>
<div class="a tx t13" style="left:579px;top:351.5px;color:#111">10.4</div>
<div class="a tx t13" style="left:460px;top:369.5px;color:#8c0c12">9</div>
<div class="a tx t13" style="left:484px;top:369.5px;color:#111">42.3</div>
<div class="a tx t13" style="left:519px;top:369.5px;color:#111">13.4</div>
<div class="a" style="left:558px;top:375.5px;width:9px;height:1px;background:#111"></div>
<div class="a tx t13" style="left:579px;top:369.5px;color:#111">15.7</div>
<div class="a tx t13" style="left:460px;top:387.5px;color:#8c0c12">10</div>
<div class="a tx t13" style="left:484px;top:387.5px;color:#111">34.6</div>
<div class="a tx t13" style="left:519px;top:387.5px;color:#111">10.7</div>
<div class="a" style="left:558px;top:393.5px;width:9px;height:1px;background:#111"></div>
<div class="a tx t13" style="left:579px;top:387.5px;color:#111">12.4</div>
<div class="a tx t13" style="left:460px;top:405.5px;color:#8c0c12">11</div>
<div class="a tx t13" style="left:484px;top:405.5px;color:#111">345.2</div>
<div class="a tx t13" style="left:519px;top:405.5px;color:#111">139.2</div>
<div class="a" style="left:558px;top:411.5px;width:9px;height:1px;background:#111"></div>
<div class="a tx t13" style="left:579px;top:405.5px;color:#111">164.3</div>
<div class="a tx t13" style="left:460px;top:423.5px;color:#8c0c12">12</div>
<div class="a tx t13" style="left:484px;top:423.5px;color:#111">39.9</div>
<div class="a tx t13" style="left:519px;top:423.5px;color:#111">12.3</div>
<div class="a" style="left:558px;top:429.5px;width:9px;height:1px;background:#111"></div>
<div class="a tx t13" style="left:579px;top:423.5px;color:#111">14.4</div>
<div class="a tx t13" style="left:460px;top:441.5px;color:#8c0c12">13</div>
<div class="a tx t13" style="left:484px;top:441.5px;color:#111">159.3</div>
<div class="a tx t13" style="left:519px;top:441.5px;color:#111">46.9</div>
<div class="a" style="left:558px;top:447.5px;width:9px;height:1px;background:#111"></div>
<div class="a tx t13" style="left:579px;top:441.5px;color:#111">55.2</div>
<div class="a tx t13" style="left:460px;top:459.5px;color:#8c0c12">14</div>
<div class="a tx t13" style="left:484px;top:459.5px;color:#111">64.8</div>
<div class="a tx t13" style="left:519px;top:459.5px;color:#111">20.6</div>
<div class="a" style="left:558px;top:465.5px;width:9px;height:1px;background:#111"></div>
<div class="a tx t13" style="left:579px;top:459.5px;color:#111">24.2</div>
<div class="a tx t13" style="left:460px;top:477.5px;color:#8c0c12">15</div>
<div class="a tx t13" style="left:484px;top:477.5px;color:#111">414.2</div>
<div class="a tx t13" style="left:519px;top:477.5px;color:#111">139.0</div>
<div class="a" style="left:558px;top:483.5px;width:9px;height:1px;background:#111"></div>
<div class="a tx t13" style="left:579px;top:477.5px;color:#111">164.0</div>
<div class="a" style="left:670px;top:49.0px;width:7px;height:5px;border-top:1px solid #1838c0;border-bottom:1px solid #1838c0"></div>
<div class="a" style="left:751.5px;top:49.0px;width:7px;height:5px;border-top:1px solid #1838c0;border-bottom:1px solid #1838c0"></div>
<div class="a" style="left:681px;top:49.0px;width:7px;height:5px;border-top:1px solid #1838c0;border-bottom:1px solid #1838c0"></div>
<div class="a" style="left:762.5px;top:49.0px;width:7px;height:5px;border-top:1px solid #1838c0;border-bottom:1px solid #1838c0"></div>
<div class="a" style="left:692px;top:49.0px;width:7px;height:5px;border-top:1px solid #1838c0;border-bottom:1px solid #1838c0"></div>
<div class="a" style="left:773.5px;top:49.0px;width:7px;height:5px;border-top:1px solid #1838c0;border-bottom:1px solid #1838c0"></div>
<div class="a" style="left:703px;top:49.0px;width:7px;height:5px;border-top:1px solid #1838c0;border-bottom:1px solid #1838c0"></div>
<div class="a" style="left:784.5px;top:49.0px;width:7px;height:5px;border-top:1px solid #1838c0;border-bottom:1px solid #1838c0"></div>
<div class="a" style="left:714px;top:49.0px;width:7px;height:5px;border-top:1px solid #1838c0;border-bottom:1px solid #1838c0"></div>
<div class="a" style="left:795.5px;top:49.0px;width:7px;height:5px;border-top:1px solid #1838c0;border-bottom:1px solid #1838c0"></div>
<div class="a" style="left:725px;top:49.0px;width:7px;height:5px;border-top:1px solid #1838c0;border-bottom:1px solid #1838c0"></div>
<div class="a" style="left:806.5px;top:49.0px;width:7px;height:5px;border-top:1px solid #1838c0;border-bottom:1px solid #1838c0"></div>
<div class="a tx" style="left:739px;top:45.5px;color:#2050c0;font-size:13px">4</div>
<div class="a tx t13" style="left:670px;top:63.5px;color:#8c0c12">5</div>
<div class="a tx t13" style="left:694px;top:63.5px;color:#111">12.8</div>
<div class="a tx t13" style="left:729px;top:63.5px;color:#111">4.4</div>
<div class="a" style="left:768px;top:69.5px;width:9px;height:1px;background:#111"></div>
<div class="a tx t13" style="left:789px;top:63.5px;color:#111">5.1</div>
<div class="a tx t13" style="left:670px;top:81.5px;color:#8c0c12">6</div>
<div class="a tx t13" style="left:694px;top:81.5px;color:#111">16.1</div>
<div class="a tx t13" style="left:729px;top:81.5px;color:#111">5.4</div>
<div class="a" style="left:768px;top:87.5px;width:9px;height:1px;background:#111"></div>
<div class="a tx t13" style="left:789px;top:81.5px;color:#111">6.2</div>
<div class="a tx t13" style="left:670px;top:99.5px;color:#8c0c12">7</div>
<div class="a tx t13" style="left:694px;top:99.5px;color:#111">517.8</div>
<div class="a tx t13" style="left:729px;top:99.5px;color:#111">139.0</div>
<div class="a" style="left:768px;top:105.5px;width:9px;height:1px;background:#111"></div>
<div class="a tx t13" style="left:789px;top:99.5px;color:#111">164.0</div>
<div class="a tx t13" style="left:670px;top:117.5px;color:#8c0c12">8</div>
<div class="a tx t13" style="left:694px;top:117.5px;color:#111">14.4</div>
<div class="a tx t13" style="left:729px;top:117.5px;color:#111">5.0</div>
<div class="a" style="left:768px;top:123.5px;width:9px;height:1px;background:#111"></div>
<div class="a tx t13" style="left:789px;top:117.5px;color:#111">5.7</div>
<div class="a tx t13" style="left:670px;top:135.5px;color:#8c0c12">9</div>
<div class="a tx t13" style="left:694px;top:135.5px;color:#111">21.8</div>
<div class="a tx t13" style="left:729px;top:135.5px;color:#111">7.1</div>
<div class="a" style="left:768px;top:141.5px;width:9px;height:1px;background:#111"></div>
<div class="a tx t13" style="left:789px;top:135.5px;color:#111">8.2</div>
<div class="a tx t13" style="left:670px;top:153.5px;color:#8c0c12">10</div>
<div class="a tx t13" style="left:694px;top:153.5px;color:#111">18.1</div>
<div class="a tx t13" style="left:729px;top:153.5px;color:#111">5.9</div>
<div class="a" style="left:768px;top:159.5px;width:9px;height:1px;background:#111"></div>
<div class="a tx t13" style="left:789px;top:153.5px;color:#111">6.8</div>
<div class="a tx t13" style="left:670px;top:171.5px;color:#8c0c12">11</div>
<div class="a tx t13" style="left:694px;top:171.5px;color:#111">188.3</div>
<div class="a tx t13" style="left:729px;top:171.5px;color:#111">70.2</div>
<div class="a" style="left:768px;top:177.5px;width:9px;height:1px;background:#111"></div>
<div class="a tx t13" style="left:789px;top:171.5px;color:#111">82.7</div>
<div class="a tx t13" style="left:670px;top:189.5px;color:#8c0c12">12</div>
<div class="a tx t13" style="left:694px;top:189.5px;color:#111">20.6</div>
<div class="a tx t13" style="left:729px;top:189.5px;color:#111">6.8</div>
<div class="a" style="left:768px;top:195.5px;width:9px;height:1px;background:#111"></div>
<div class="a tx t13" style="left:789px;top:189.5px;color:#111">7.9</div>
<div class="a tx t13" style="left:670px;top:207.5px;color:#8c0c12">13</div>
<div class="a tx t13" style="left:694px;top:207.5px;color:#111">79.7</div>
<div class="a tx t13" style="left:729px;top:207.5px;color:#111">23.8</div>
<div class="a" style="left:768px;top:213.5px;width:9px;height:1px;background:#111"></div>
<div class="a tx t13" style="left:789px;top:207.5px;color:#111">28.0</div>
<div class="a tx t13" style="left:670px;top:225.5px;color:#8c0c12">14</div>
<div class="a tx t13" style="left:694px;top:225.5px;color:#111">32.9</div>
<div class="a tx t13" style="left:729px;top:225.5px;color:#111">10.7</div>
<div class="a" style="left:768px;top:231.5px;width:9px;height:1px;background:#111"></div>
<div class="a tx t13" style="left:789px;top:225.5px;color:#111">12.5</div>
<div class="a tx t13" style="left:670px;top:243.5px;color:#8c0c12">15</div>
<div class="a tx t13" style="left:694px;top:243.5px;color:#111">230.1</div>
<div class="a tx t13" style="left:729px;top:243.5px;color:#111">70.0</div>
<div class="a" style="left:768px;top:249.5px;width:9px;height:1px;background:#111"></div>
<div class="a tx t13" style="left:789px;top:243.5px;color:#111">82.5</div>
<div class="a tx t13" style="left:670px;top:261.5px;color:#8c0c12">16</div>
<div class="a tx t13" style="left:694px;top:261.5px;color:#111">69.1</div>
<div class="a tx t13" style="left:729px;top:261.5px;color:#111">20.5</div>
<div class="a" style="left:768px;top:267.5px;width:9px;height:1px;background:#111"></div>
<div class="a tx t13" style="left:789px;top:261.5px;color:#111">24.1</div>
<div class="a" style="left:670px;top:301.0px;width:7px;height:5px;border-top:1px solid #1838c0;border-bottom:1px solid #1838c0"></div>
<div class="a" style="left:751.5px;top:301.0px;width:7px;height:5px;border-top:1px solid #1838c0;border-bottom:1px solid #1838c0"></div>
<div class="a" style="left:681px;top:301.0px;width:7px;height:5px;border-top:1px solid #1838c0;border-bottom:1px solid #1838c0"></div>
<div class="a" style="left:762.5px;top:301.0px;width:7px;height:5px;border-top:1px solid #1838c0;border-bottom:1px solid #1838c0"></div>
<div class="a" style="left:692px;top:301.0px;width:7px;height:5px;border-top:1px solid #1838c0;border-bottom:1px solid #1838c0"></div>
<div class="a" style="left:773.5px;top:301.0px;width:7px;height:5px;border-top:1px solid #1838c0;border-bottom:1px solid #1838c0"></div>
<div class="a" style="left:703px;top:301.0px;width:7px;height:5px;border-top:1px solid #1838c0;border-bottom:1px solid #1838c0"></div>
<div class="a" style="left:784.5px;top:301.0px;width:7px;height:5px;border-top:1px solid #1838c0;border-bottom:1px solid #1838c0"></div>
<div class="a" style="left:714px;top:301.0px;width:7px;height:5px;border-top:1px solid #1838c0;border-bottom:1px solid #1838c0"></div>
<div class="a" style="left:795.5px;top:301.0px;width:7px;height:5px;border-top:1px solid #1838c0;border-bottom:1px solid #1838c0"></div>
<div class="a" style="left:725px;top:301.0px;width:7px;height:5px;border-top:1px solid #1838c0;border-bottom:1px solid #1838c0"></div>
<div class="a" style="left:806.5px;top:301.0px;width:7px;height:5px;border-top:1px solid #1838c0;border-bottom:1px solid #1838c0"></div>
<div class="a tx" style="left:739px;top:297.5px;color:#2050c0;font-size:13px">5</div>
<div class="a tx t13" style="left:670px;top:315.5px;color:#8c0c12">6</div>
<div class="a tx t13" style="left:694px;top:315.5px;color:#111">24.7</div>
<div class="a tx t13" style="left:729px;top:315.5px;color:#111">8.1</div>
<div class="a" style="left:768px;top:321.5px;width:9px;height:1px;background:#111"></div>
<div class="a tx t13" style="left:789px;top:315.5px;color:#111">9.4</div>
<div class="a tx t13" style="left:670px;top:333.5px;color:#8c0c12">7</div>
<div class="a tx t13" style="left:694px;top:333.5px;color:#111">690.3</div>
<div class="a tx t13" style="left:729px;top:333.5px;color:#111">138.9</div>
<div class="a" style="left:768px;top:339.5px;width:9px;height:1px;background:#111"></div>
<div class="a tx t13" style="left:789px;top:333.5px;color:#111">163.9</div>
<div class="a tx t13" style="left:670px;top:351.5px;color:#8c0c12">8</div>
<div class="a tx t13" style="left:694px;top:351.5px;color:#111">22.1</div>
<div class="a tx t13" style="left:729px;top:351.5px;color:#111">7.1</div>
<div class="a" style="left:768px;top:357.5px;width:9px;height:1px;background:#111"></div>
<div class="a tx t13" style="left:789px;top:351.5px;color:#111">8.2</div>
<div class="a tx t13" style="left:670px;top:369.5px;color:#8c0c12">9</div>
<div class="a tx t13" style="left:694px;top:369.5px;color:#111">32.9</div>
<div class="a tx t13" style="left:729px;top:369.5px;color:#111">10.7</div>
<div class="a" style="left:768px;top:375.5px;width:9px;height:1px;background:#111"></div>
<div class="a tx t13" style="left:789px;top:369.5px;color:#111">12.5</div>
<div class="a tx t13" style="left:670px;top:387.5px;color:#8c0c12">10</div>
<div class="a tx t13" style="left:694px;top:387.5px;color:#111">27.3</div>
<div class="a tx t13" style="left:729px;top:387.5px;color:#111">8.9</div>
<div class="a" style="left:768px;top:393.5px;width:9px;height:1px;background:#111"></div>
<div class="a tx t13" style="left:789px;top:387.5px;color:#111">10.4</div>
<div class="a tx t13" style="left:670px;top:405.5px;color:#8c0c12">11</div>
<div class="a tx t13" style="left:694px;top:405.5px;color:#111">295.9</div>
<div class="a tx t13" style="left:729px;top:405.5px;color:#111">139.5</div>
<div class="a" style="left:768px;top:411.5px;width:9px;height:1px;background:#111"></div>
<div class="a tx t13" style="left:789px;top:405.5px;color:#111">164.6</div>
<div class="a tx t13" style="left:670px;top:423.5px;color:#8c0c12">12</div>
<div class="a tx t13" style="left:694px;top:423.5px;color:#111">31.4</div>
<div class="a tx t13" style="left:729px;top:423.5px;color:#111">10.0</div>
<div class="a" style="left:768px;top:429.5px;width:9px;height:1px;background:#111"></div>
<div class="a tx t13" style="left:789px;top:423.5px;color:#111">11.7</div>
<div class="a tx t13" style="left:670px;top:441.5px;color:#8c0c12">13</div>
<div class="a tx t13" style="left:694px;top:441.5px;color:#111">121.9</div>
<div class="a tx t13" style="left:729px;top:441.5px;color:#111">35.3</div>
<div class="a" style="left:768px;top:447.5px;width:9px;height:1px;background:#111"></div>
<div class="a tx t13" style="left:789px;top:441.5px;color:#111">41.6</div>
<div class="a tx t13" style="left:670px;top:459.5px;color:#8c0c12">14</div>
<div class="a tx t13" style="left:694px;top:459.5px;color:#111">50.6</div>
<div class="a tx t13" style="left:729px;top:459.5px;color:#111">16.2</div>
<div class="a" style="left:768px;top:465.5px;width:9px;height:1px;background:#111"></div>
<div class="a tx t13" style="left:789px;top:459.5px;color:#111">19.0</div>
<div class="a tx t13" style="left:670px;top:477.5px;color:#8c0c12">15</div>
<div class="a tx t13" style="left:694px;top:477.5px;color:#111">517.8</div>
<div class="a tx t13" style="left:729px;top:477.5px;color:#111">139.0</div>
<div class="a" style="left:768px;top:483.5px;width:9px;height:1px;background:#111"></div>
<div class="a tx t13" style="left:789px;top:477.5px;color:#111">164.0</div>
</div>
<div class="a" style="left:936px;top:48px;width:63px;height:511px;background:#FCF1C2;box-shadow:1px 0 0 #e09040"></div>
<div class="a" style="left:936px;top:48px;width:63px;height:1px;background:repeating-linear-gradient(90deg,#a87050 0 5px,#5a2a10 5px 7px,#b88060 7px 12px,#6a3418 12px 13px,#a06848 13px 19px,#4a1a08 19px 21px,#b07858 21px 29px)"></div>
<div class="a" style="left:937px;top:49px;width:61px;height:1px;background:repeating-linear-gradient(90deg,#4a1a08 0 6px,#7a4428 6px 7px,#3a1204 7px 13px,#8a5434 13px 14px,#5a2410 14px 22px,#6a3418 22px 23px,#3a1204 23px 31px)"></div>
<div class="a" style="left:936px;top:557px;width:63px;height:2px;background:repeating-linear-gradient(90deg,#4a1a08 0 6px,#7a4428 6px 7px,#3a1204 7px 13px,#8a5434 13px 14px,#5a2410 14px 22px,#6a3418 22px 23px,#3a1204 23px 31px)"></div>
<div class="a" style="left:936px;top:48px;width:1px;height:511px;background:repeating-linear-gradient(180deg,#a87050 0 5px,#5a2a10 5px 7px,#b88060 7px 12px,#6a3418 12px 13px,#a06848 13px 19px,#4a1a08 19px 21px,#b07858 21px 29px)"></div>
<div class="a" style="left:937px;top:49px;width:1px;height:509px;background:repeating-linear-gradient(180deg,#4a1a08 0 6px,#7a4428 6px 7px,#3a1204 7px 13px,#8a5434 13px 14px,#5a2410 14px 22px,#6a3418 22px 23px,#3a1204 23px 31px)"></div>
<div class="a" style="left:997px;top:48px;width:2px;height:511px;background:repeating-linear-gradient(180deg,#4a1a08 0 6px,#7a4428 6px 7px,#3a1204 7px 13px,#8a5434 13px 14px,#5a2410 14px 22px,#6a3418 22px 23px,#3a1204 23px 31px)"></div>
<div class="a tx" style="left:949px;width:22px;text-align:center;top:56px;font-size:21px;font-weight:bold;color:#000;transform:scaleX(1.12);transform-origin:50% 0;">３</div>
<div class="a tx" style="left:949px;width:22px;text-align:center;top:81px;font-size:21px;font-weight:bold;color:#000;">歳</div>
<div class="a tx" style="left:949px;width:22px;text-align:center;top:106px;font-size:21px;font-weight:bold;color:#000;">未</div>
<div class="a tx" style="left:949px;width:22px;text-align:center;top:132px;font-size:21px;font-weight:bold;color:#000;">勝</div>
<div class="a tx" style="left:949px;width:22px;text-align:center;top:156px;font-size:21px;font-weight:bold;color:#000;">利</div>
<div class="a tx" style="left:975px;width:17px;text-align:center;top:58px;font-size:13.5px;font-weight:bold;color:#000">１</div>
<div class="a tx" style="left:975px;width:17px;text-align:center;top:72px;font-size:13.5px;font-weight:bold;color:#000">回</div>
<div class="a tx" style="left:975px;width:17px;text-align:center;top:88px;font-size:13.5px;font-weight:bold;color:#000">中</div>
<div class="a tx" style="left:975px;width:17px;text-align:center;top:103px;font-size:13.5px;font-weight:bold;color:#000">山</div>
<div class="a tx" style="left:975px;width:17px;text-align:center;top:116px;font-size:13.5px;font-weight:bold;color:#000">１</div>
<div class="a tx" style="left:975px;width:17px;text-align:center;top:129px;font-size:13.5px;font-weight:bold;color:#000">日</div>
<div class="a tx" style="left:975px;width:17px;text-align:center;top:143px;font-size:13.5px;font-weight:bold;color:#000">目</div>
<div class="a tx" style="left:975px;width:17px;text-align:center;top:170px;font-size:13.5px;font-weight:bold;color:#000">１</div>
<div class="a tx" style="left:975px;width:17px;text-align:center;top:185px;font-size:13.5px;font-weight:bold;color:#000">Ｒ</div>
<div class="a tx" style="left:975px;width:17px;text-align:center;top:205px;font-size:13.5px;font-weight:bold;color:#000">平</div>
<div class="a tx" style="left:975px;width:17px;text-align:center;top:219px;font-size:13.5px;font-weight:bold;color:#000">場</div>
<div class="a tx" style="left:975px;width:17px;text-align:center;top:276px;font-size:13.5px;font-weight:bold;color:#000">ダ</div>
<div class="a tx" style="left:975px;width:17px;text-align:center;top:291px;font-size:13.5px;font-weight:bold;color:#000">１</div>
<div class="a tx" style="left:975px;width:17px;text-align:center;top:305px;font-size:13.5px;font-weight:bold;color:#000">８</div>
<div class="a tx" style="left:975px;width:17px;text-align:center;top:321px;font-size:13.5px;font-weight:bold;color:#000">０</div>
<div class="a tx" style="left:975px;width:17px;text-align:center;top:333px;font-size:13.5px;font-weight:bold;color:#000">０</div>
<div class="a tx" style="left:975px;width:17px;text-align:center;top:356px;font-size:13.5px;font-weight:bold;color:#000">晴</div>
<div class="a tx" style="left:975px;width:17px;text-align:center;top:370px;font-size:13.5px;font-weight:bold;color:#000">れ</div>
<div class="a tx" style="left:975px;width:17px;text-align:center;top:392px;font-size:13.5px;font-weight:bold;color:#000">良</div>
<div class="a tx" style="left:941px;top:444px;font-size:11.5px;color:#000">3歳牡馬</div>
<div class="a tx" style="left:941px;top:458px;font-size:11.5px;color:#000">馬齢重量</div>
<div class="a tx" style="left:969px;top:469px;font-size:11.5px;color:#000">賞金</div>
<div class="a tx" style="left:963px;top:483px;font-size:11.5px;color:#000">50万</div>
<div class="a tx" style="left:969px;top:496px;font-size:11.5px;color:#000">1万</div>
<div class="a tx" style="left:969px;top:509px;font-size:11.5px;color:#000">2万</div>
<div class="a tx" style="left:969px;top:522px;font-size:11.5px;color:#000">3万</div>
<div class="a tx" style="left:969px;top:535px;font-size:11.5px;color:#000">5万</div>
<div class="a tabs" style="left:75px;top:567px;width:60px;height:21px"><div class="tx" style="position:absolute;left:0;right:0;top:3.5px;text-align:center;letter-spacing:-1.5px">パドック</div></div>
<div class="a taba" style="left:16px;top:567px;width:58px;height:21px"><div class="tx" style="position:absolute;left:0;right:0;top:4px;text-align:center">馬券購入</div></div>
<div class="a" style="left:15px;top:586px;width:697px;height:161px;background:#0a820a"></div>
<div class="a" style="left:15px;top:586px;width:697px;height:1px;background:repeating-linear-gradient(90deg,#a87050 0 5px,#5a2a10 5px 7px,#b88060 7px 12px,#6a3418 12px 13px,#a06848 13px 19px,#4a1a08 19px 21px,#b07858 21px 29px)"></div>
<div class="a" style="left:16px;top:587px;width:695px;height:1px;background:repeating-linear-gradient(90deg,#4a1a08 0 6px,#7a4428 6px 7px,#3a1204 7px 13px,#8a5434 13px 14px,#5a2410 14px 22px,#6a3418 22px 23px,#3a1204 23px 31px)"></div>
<div class="a" style="left:15px;top:745px;width:697px;height:2px;background:repeating-linear-gradient(90deg,#4a1a08 0 6px,#7a4428 6px 7px,#3a1204 7px 13px,#8a5434 13px 14px,#5a2410 14px 22px,#6a3418 22px 23px,#3a1204 23px 31px)"></div>
<div class="a" style="left:15px;top:586px;width:1px;height:161px;background:repeating-linear-gradient(180deg,#a87050 0 5px,#5a2a10 5px 7px,#b88060 7px 12px,#6a3418 12px 13px,#a06848 13px 19px,#4a1a08 19px 21px,#b07858 21px 29px)"></div>
<div class="a" style="left:16px;top:587px;width:1px;height:159px;background:repeating-linear-gradient(180deg,#4a1a08 0 6px,#7a4428 6px 7px,#3a1204 7px 13px,#8a5434 13px 14px,#5a2410 14px 22px,#6a3418 22px 23px,#3a1204 23px 31px)"></div>
<div class="a" style="left:710px;top:586px;width:2px;height:161px;background:repeating-linear-gradient(180deg,#4a1a08 0 6px,#7a4428 6px 7px,#3a1204 7px 13px,#8a5434 13px 14px,#5a2410 14px 22px,#6a3418 22px 23px,#3a1204 23px 31px)"></div>
<div class="a" style="left:24px;top:594px;width:590px;height:143px;background:#FBF3BC"></div>
<div class="a tx" style="left:31px;top:599px;font-size:16.5px;font-weight:bold;color:#0a7a0a;letter-spacing:-0.3px">投票カード</div>
<div class="a tx" style="left:122px;top:603px;font-size:12px;color:#0a7a0a;letter-spacing:1px">(流し)</div>
<div class="a" style="left:31px;top:628px;width:102px;height:103px;border:2px solid #1a4eb4;border-radius:9px"></div>
<div class="a tx" style="left:39px;top:622px;width:86px;height:16px;background:#0a820a;border-radius:8px;color:#fff;text-align:center;line-height:16px;font-size:12px;letter-spacing:0px">式　別</div>
<div class="a tx" style="left:51px;top:641px;font-size:12px;color:#0a7a0a">枠　連</div>
<div class="a tx" style="left:51px;top:656px;font-size:12px;color:#0a7a0a">馬　連</div>
<div class="a tx" style="left:51px;top:671px;font-size:12px;color:#0a7a0a">ワイド</div>
<div class="a tx" style="left:51px;top:686px;font-size:12px;color:#0a7a0a">軸１頭</div>
<div class="a tx" style="left:51px;top:701px;font-size:12px;color:#0a7a0a">軸２頭</div>
<div class="a" style="left:92px;top:643px;width:35px;height:10px;border:2px solid #f28a1e;border-radius:5px"></div>
<div class="a" style="left:92px;top:658px;width:35px;height:10px;border:2px solid #f28a1e;border-radius:5px"></div>
<div class="a" style="left:92px;top:672px;width:35px;height:11px;background:#000;border-radius:6px"></div>
<div class="a" style="left:92px;top:688px;width:35px;height:10px;border:2px solid #f28a1e;border-radius:5px"></div>
<div class="a" style="left:92px;top:703px;width:35px;height:10px;border:2px solid #f28a1e;border-radius:5px"></div>
<div class="a" style="left:36px;top:684px;width:12px;height:32px;border:1px solid #0a7a0a"></div>
<div class="a" style="left:37px;top:685px;width:10px;font-size:10px;line-height:10px;color:#0a7a0a;text-align:center">3<br>連<br>複</div>
<div class="a" style="left:147px;top:628px;width:283px;height:103px;border:2px solid #1a4eb4;border-radius:9px"></div>
<div class="a tx" style="left:194px;top:622px;width:189px;height:16px;background:#0a820a;border-radius:8px;color:#fff;text-align:center;line-height:16px;font-size:12px;letter-spacing:0px">枠番・馬番</div>
<div class="a" style="left:156px;top:642px;width:19px;height:38px;border:1px solid #0a7a0a"></div>
<div class="a" style="left:156px;top:689px;width:19px;height:38px;border:1px solid #0a7a0a"></div>
<div class="a tx" style="left:156px;width:19px;text-align:center;top:656px;font-size:10.5px;color:#0a7a0a">軸</div>
<div class="a" style="left:156px;top:698px;width:19px;font-size:10.5px;line-height:10.5px;color:#0a7a0a;text-align:center">相<br>手</div>
<div class="a" style="left:157px;top:683px;width:243px;height:2px;background:#1a4eb4"></div>
<div class="a" style="left:182px;top:660.7px;width:218px;height:1.8px;background:#f6a040"></div>
<div class="a" style="left:182px;top:706.7px;width:218px;height:1.8px;background:#f6a040"></div>
<div class="a" style="left:185px;top:643.5px;width:9.3px;height:17px;background:#000;border-radius:4.6px/5px"></div>
<svg class="a" style="left:184.0px;top:688.5px" width="11" height="18.0"><path d="M1,4 Q5.5,-0.5 10,4 M1,14.0 Q5.5,18.5 10,14.0" fill="none" stroke="#f28a1e" stroke-width="1.3"/></svg>
<div class="a tx" style="left:179.5px;width:20px;text-align:center;top:693.0px;font-size:10px;font-weight:bold;color:#f28a1e;transform:scaleX(1.0)">1</div>
<svg class="a" style="left:213.0px;top:642px" width="11" height="18"><path d="M1,4 Q5.5,-0.5 10,4 M1,14 Q5.5,18.5 10,14" fill="none" stroke="#f28a1e" stroke-width="1.3"/></svg>
<div class="a tx" style="left:208.5px;width:20px;text-align:center;top:646.5px;font-size:10px;font-weight:bold;color:#f28a1e;transform:scaleX(1.0)">2</div>
<svg class="a" style="left:213.0px;top:688.5px" width="11" height="18.0"><path d="M1,4 Q5.5,-0.5 10,4 M1,14.0 Q5.5,18.5 10,14.0" fill="none" stroke="#f28a1e" stroke-width="1.3"/></svg>
<div class="a tx" style="left:208.5px;width:20px;text-align:center;top:693.0px;font-size:10px;font-weight:bold;color:#f28a1e;transform:scaleX(1.0)">2</div>
<svg class="a" style="left:242.0px;top:642px" width="11" height="18"><path d="M1,4 Q5.5,-0.5 10,4 M1,14 Q5.5,18.5 10,14" fill="none" stroke="#f28a1e" stroke-width="1.3"/></svg>
<div class="a tx" style="left:237.5px;width:20px;text-align:center;top:646.5px;font-size:10px;font-weight:bold;color:#f28a1e;transform:scaleX(1.0)">3</div>
<svg class="a" style="left:242.0px;top:688.5px" width="11" height="18.0"><path d="M1,4 Q5.5,-0.5 10,4 M1,14.0 Q5.5,18.5 10,14.0" fill="none" stroke="#f28a1e" stroke-width="1.3"/></svg>
<div class="a tx" style="left:237.5px;width:20px;text-align:center;top:693.0px;font-size:10px;font-weight:bold;color:#f28a1e;transform:scaleX(1.0)">3</div>
<svg class="a" style="left:271.0px;top:642px" width="11" height="18"><path d="M1,4 Q5.5,-0.5 10,4 M1,14 Q5.5,18.5 10,14" fill="none" stroke="#f28a1e" stroke-width="1.3"/></svg>
<div class="a tx" style="left:266.5px;width:20px;text-align:center;top:646.5px;font-size:10px;font-weight:bold;color:#f28a1e;transform:scaleX(1.0)">4</div>
<svg class="a" style="left:271.0px;top:688.5px" width="11" height="18.0"><path d="M1,4 Q5.5,-0.5 10,4 M1,14.0 Q5.5,18.5 10,14.0" fill="none" stroke="#f28a1e" stroke-width="1.3"/></svg>
<div class="a tx" style="left:266.5px;width:20px;text-align:center;top:693.0px;font-size:10px;font-weight:bold;color:#f28a1e;transform:scaleX(1.0)">4</div>
<svg class="a" style="left:300.0px;top:642px" width="11" height="18"><path d="M1,4 Q5.5,-0.5 10,4 M1,14 Q5.5,18.5 10,14" fill="none" stroke="#f28a1e" stroke-width="1.3"/></svg>
<div class="a tx" style="left:295.5px;width:20px;text-align:center;top:646.5px;font-size:10px;font-weight:bold;color:#f28a1e;transform:scaleX(1.0)">5</div>
<svg class="a" style="left:300.0px;top:688.5px" width="11" height="18.0"><path d="M1,4 Q5.5,-0.5 10,4 M1,14.0 Q5.5,18.5 10,14.0" fill="none" stroke="#f28a1e" stroke-width="1.3"/></svg>
<div class="a tx" style="left:295.5px;width:20px;text-align:center;top:693.0px;font-size:10px;font-weight:bold;color:#f28a1e;transform:scaleX(1.0)">5</div>
<svg class="a" style="left:329.0px;top:642px" width="11" height="18"><path d="M1,4 Q5.5,-0.5 10,4 M1,14 Q5.5,18.5 10,14" fill="none" stroke="#f28a1e" stroke-width="1.3"/></svg>
<div class="a tx" style="left:324.5px;width:20px;text-align:center;top:646.5px;font-size:10px;font-weight:bold;color:#f28a1e;transform:scaleX(1.0)">6</div>
<svg class="a" style="left:329.0px;top:688.5px" width="11" height="18.0"><path d="M1,4 Q5.5,-0.5 10,4 M1,14.0 Q5.5,18.5 10,14.0" fill="none" stroke="#f28a1e" stroke-width="1.3"/></svg>
<div class="a tx" style="left:324.5px;width:20px;text-align:center;top:693.0px;font-size:10px;font-weight:bold;color:#f28a1e;transform:scaleX(1.0)">6</div>
<svg class="a" style="left:358.0px;top:642px" width="11" height="18"><path d="M1,4 Q5.5,-0.5 10,4 M1,14 Q5.5,18.5 10,14" fill="none" stroke="#f28a1e" stroke-width="1.3"/></svg>
<div class="a tx" style="left:353.5px;width:20px;text-align:center;top:646.5px;font-size:10px;font-weight:bold;color:#f28a1e;transform:scaleX(1.0)">7</div>
<svg class="a" style="left:358.0px;top:688.5px" width="11" height="18.0"><path d="M1,4 Q5.5,-0.5 10,4 M1,14.0 Q5.5,18.5 10,14.0" fill="none" stroke="#f28a1e" stroke-width="1.3"/></svg>
<div class="a tx" style="left:353.5px;width:20px;text-align:center;top:693.0px;font-size:10px;font-weight:bold;color:#f28a1e;transform:scaleX(1.0)">7</div>
<svg class="a" style="left:387.0px;top:642px" width="11" height="18"><path d="M1,4 Q5.5,-0.5 10,4 M1,14 Q5.5,18.5 10,14" fill="none" stroke="#f28a1e" stroke-width="1.3"/></svg>
<div class="a tx" style="left:382.5px;width:20px;text-align:center;top:646.5px;font-size:10px;font-weight:bold;color:#f28a1e;transform:scaleX(1.0)">8</div>
<svg class="a" style="left:387.0px;top:688.5px" width="11" height="18.0"><path d="M1,4 Q5.5,-0.5 10,4 M1,14.0 Q5.5,18.5 10,14.0" fill="none" stroke="#f28a1e" stroke-width="1.3"/></svg>
<div class="a tx" style="left:382.5px;width:20px;text-align:center;top:693.0px;font-size:10px;font-weight:bold;color:#f28a1e;transform:scaleX(1.0)">8</div>
<svg class="a" style="left:183.5px;top:663.5px" width="11" height="18.0"><path d="M1,4 Q5.5,-0.5 10,4 M1,14.0 Q5.5,18.5 10,14.0" fill="none" stroke="#f28a1e" stroke-width="1.3"/></svg>
<div class="a tx" style="left:179.0px;width:20px;text-align:center;top:668.0px;font-size:10px;font-weight:bold;color:#f28a1e;transform:scaleX(1.0)">9</div>
<svg class="a" style="left:183.5px;top:710px" width="11" height="18"><path d="M1,4 Q5.5,-0.5 10,4 M1,14 Q5.5,18.5 10,14" fill="none" stroke="#f28a1e" stroke-width="1.3"/></svg>
<div class="a tx" style="left:179.0px;width:20px;text-align:center;top:714.5px;font-size:10px;font-weight:bold;color:#f28a1e;transform:scaleX(1.0)">9</div>
<svg class="a" style="left:206.3px;top:663.5px" width="11" height="18.0"><path d="M1,4 Q5.5,-0.5 10,4 M1,14.0 Q5.5,18.5 10,14.0" fill="none" stroke="#f28a1e" stroke-width="1.3"/></svg>
<div class="a tx" style="left:201.8px;width:20px;text-align:center;top:667.75px;font-size:11.5px;font-weight:bold;color:#f28a1e;transform:scaleX(0.8)">10</div>
<svg class="a" style="left:206.3px;top:710px" width="11" height="18"><path d="M1,4 Q5.5,-0.5 10,4 M1,14 Q5.5,18.5 10,14" fill="none" stroke="#f28a1e" stroke-width="1.3"/></svg>
<div class="a tx" style="left:201.8px;width:20px;text-align:center;top:714.25px;font-size:11.5px;font-weight:bold;color:#f28a1e;transform:scaleX(0.8)">10</div>
<svg class="a" style="left:229.1px;top:663.5px" width="11" height="18.0"><path d="M1,4 Q5.5,-0.5 10,4 M1,14.0 Q5.5,18.5 10,14.0" fill="none" stroke="#f28a1e" stroke-width="1.3"/></svg>
<div class="a tx" style="left:224.6px;width:20px;text-align:center;top:667.75px;font-size:11.5px;font-weight:bold;color:#f28a1e;transform:scaleX(0.8)">11</div>
<svg class="a" style="left:229.1px;top:710px" width="11" height="18"><path d="M1,4 Q5.5,-0.5 10,4 M1,14 Q5.5,18.5 10,14" fill="none" stroke="#f28a1e" stroke-width="1.3"/></svg>
<div class="a tx" style="left:224.6px;width:20px;text-align:center;top:714.25px;font-size:11.5px;font-weight:bold;color:#f28a1e;transform:scaleX(0.8)">11</div>
<svg class="a" style="left:251.89999999999998px;top:663.5px" width="11" height="18.0"><path d="M1,4 Q5.5,-0.5 10,4 M1,14.0 Q5.5,18.5 10,14.0" fill="none" stroke="#f28a1e" stroke-width="1.3"/></svg>
<div class="a tx" style="left:247.39999999999998px;width:20px;text-align:center;top:667.75px;font-size:11.5px;font-weight:bold;color:#f28a1e;transform:scaleX(0.8)">12</div>
<svg class="a" style="left:251.89999999999998px;top:710px" width="11" height="18"><path d="M1,4 Q5.5,-0.5 10,4 M1,14 Q5.5,18.5 10,14" fill="none" stroke="#f28a1e" stroke-width="1.3"/></svg>
<div class="a tx" style="left:247.39999999999998px;width:20px;text-align:center;top:714.25px;font-size:11.5px;font-weight:bold;color:#f28a1e;transform:scaleX(0.8)">12</div>
<svg class="a" style="left:274.7px;top:663.5px" width="11" height="18.0"><path d="M1,4 Q5.5,-0.5 10,4 M1,14.0 Q5.5,18.5 10,14.0" fill="none" stroke="#f28a1e" stroke-width="1.3"/></svg>
<div class="a tx" style="left:270.2px;width:20px;text-align:center;top:667.75px;font-size:11.5px;font-weight:bold;color:#f28a1e;transform:scaleX(0.8)">13</div>
<svg class="a" style="left:274.7px;top:710px" width="11" height="18"><path d="M1,4 Q5.5,-0.5 10,4 M1,14 Q5.5,18.5 10,14" fill="none" stroke="#f28a1e" stroke-width="1.3"/></svg>
<div class="a tx" style="left:270.2px;width:20px;text-align:center;top:714.25px;font-size:11.5px;font-weight:bold;color:#f28a1e;transform:scaleX(0.8)">13</div>
<svg class="a" style="left:297.5px;top:663.5px" width="11" height="18.0"><path d="M1,4 Q5.5,-0.5 10,4 M1,14.0 Q5.5,18.5 10,14.0" fill="none" stroke="#f28a1e" stroke-width="1.3"/></svg>
<div class="a tx" style="left:293.0px;width:20px;text-align:center;top:667.75px;font-size:11.5px;font-weight:bold;color:#f28a1e;transform:scaleX(0.8)">14</div>
<svg class="a" style="left:297.5px;top:710px" width="11" height="18"><path d="M1,4 Q5.5,-0.5 10,4 M1,14 Q5.5,18.5 10,14" fill="none" stroke="#f28a1e" stroke-width="1.3"/></svg>
<div class="a tx" style="left:293.0px;width:20px;text-align:center;top:714.25px;font-size:11.5px;font-weight:bold;color:#f28a1e;transform:scaleX(0.8)">14</div>
<svg class="a" style="left:320.3px;top:663.5px" width="11" height="18.0"><path d="M1,4 Q5.5,-0.5 10,4 M1,14.0 Q5.5,18.5 10,14.0" fill="none" stroke="#f28a1e" stroke-width="1.3"/></svg>
<div class="a tx" style="left:315.8px;width:20px;text-align:center;top:667.75px;font-size:11.5px;font-weight:bold;color:#f28a1e;transform:scaleX(0.8)">15</div>
<svg class="a" style="left:320.3px;top:710px" width="11" height="18"><path d="M1,4 Q5.5,-0.5 10,4 M1,14 Q5.5,18.5 10,14" fill="none" stroke="#f28a1e" stroke-width="1.3"/></svg>
<div class="a tx" style="left:315.8px;width:20px;text-align:center;top:714.25px;font-size:11.5px;font-weight:bold;color:#f28a1e;transform:scaleX(0.8)">15</div>
<svg class="a" style="left:343.1px;top:663.5px" width="11" height="18.0"><path d="M1,4 Q5.5,-0.5 10,4 M1,14.0 Q5.5,18.5 10,14.0" fill="none" stroke="#f28a1e" stroke-width="1.3"/></svg>
<div class="a tx" style="left:338.6px;width:20px;text-align:center;top:667.75px;font-size:11.5px;font-weight:bold;color:#f28a1e;transform:scaleX(0.8)">16</div>
<svg class="a" style="left:343.1px;top:710px" width="11" height="18"><path d="M1,4 Q5.5,-0.5 10,4 M1,14 Q5.5,18.5 10,14" fill="none" stroke="#f28a1e" stroke-width="1.3"/></svg>
<div class="a tx" style="left:338.6px;width:20px;text-align:center;top:714.25px;font-size:11.5px;font-weight:bold;color:#f28a1e;transform:scaleX(0.8)">16</div>
<svg class="a" style="left:365.9px;top:663.5px" width="11" height="18.0"><path d="M1,4 Q5.5,-0.5 10,4 M1,14.0 Q5.5,18.5 10,14.0" fill="none" stroke="#f28a1e" stroke-width="1.3"/></svg>
<div class="a tx" style="left:361.4px;width:20px;text-align:center;top:667.75px;font-size:11.5px;font-weight:bold;color:#f28a1e;transform:scaleX(0.8)">17</div>
<svg class="a" style="left:365.9px;top:710px" width="11" height="18"><path d="M1,4 Q5.5,-0.5 10,4 M1,14 Q5.5,18.5 10,14" fill="none" stroke="#f28a1e" stroke-width="1.3"/></svg>
<div class="a tx" style="left:361.4px;width:20px;text-align:center;top:714.25px;font-size:11.5px;font-weight:bold;color:#f28a1e;transform:scaleX(0.8)">17</div>
<svg class="a" style="left:388.70000000000005px;top:663.5px" width="11" height="18.0"><path d="M1,4 Q5.5,-0.5 10,4 M1,14.0 Q5.5,18.5 10,14.0" fill="none" stroke="#f28a1e" stroke-width="1.3"/></svg>
<div class="a tx" style="left:384.20000000000005px;width:20px;text-align:center;top:667.75px;font-size:11.5px;font-weight:bold;color:#f28a1e;transform:scaleX(0.8)">18</div>
<svg class="a" style="left:388.70000000000005px;top:710px" width="11" height="18"><path d="M1,4 Q5.5,-0.5 10,4 M1,14 Q5.5,18.5 10,14" fill="none" stroke="#f28a1e" stroke-width="1.3"/></svg>
<div class="a tx" style="left:384.20000000000005px;width:20px;text-align:center;top:714.25px;font-size:11.5px;font-weight:bold;color:#f28a1e;transform:scaleX(0.8)">18</div>
<div class="a" style="left:407px;top:658px;width:13px;font-size:10px;line-height:10px;color:#0a7a0a;text-align:center">全<br>通<br>り</div>
<div class="a" style="left:409.2px;top:691.8px;width:9.2px;height:35px;background:#000;border-radius:4.6px/6px"></div>
<div class="a" style="left:444px;top:628px;width:100px;height:103px;border:2px solid #1a4eb4;border-radius:9px"></div>
<div class="a tx" style="left:452px;top:622px;width:85px;height:16px;background:#0a820a;border-radius:8px;color:#fff;text-align:center;line-height:16px;font-size:12px;letter-spacing:0px">金　額</div>
<svg class="a" style="left:458.2px;top:651.8px" width="14" height="21.0"><path d="M1,4 Q7.0,-0.5 13,4 M1,17.0 Q7.0,21.5 13,17.0" fill="none" stroke="#f28a1e" stroke-width="1.3"/></svg>
<div class="a tx" style="left:455.2px;width:20px;text-align:center;top:656.8px;font-size:12px;font-weight:bold;color:#f28a1e;transform:scaleX(1.0)">30</div>
<svg class="a" style="left:478.5px;top:651.8px" width="14" height="21.0"><path d="M1,4 Q7.0,-0.5 13,4 M1,17.0 Q7.0,21.5 13,17.0" fill="none" stroke="#f28a1e" stroke-width="1.3"/></svg>
<div class="a tx" style="left:475.5px;width:20px;text-align:center;top:656.8px;font-size:12px;font-weight:bold;color:#f28a1e;transform:scaleX(1.0)">20</div>
<svg class="a" style="left:520.8px;top:651.8px" width="14" height="21.0"><path d="M1,4 Q7.0,-0.5 13,4 M1,17.0 Q7.0,21.5 13,17.0" fill="none" stroke="#f28a1e" stroke-width="1.3"/></svg>
<div class="a tx" style="left:517.8px;width:20px;text-align:center;top:656.8px;font-size:12px;font-weight:bold;color:#f28a1e;transform:scaleX(1.0)">5</div>
<svg class="a" style="left:458.2px;top:695.8px" width="14" height="21.0"><path d="M1,4 Q7.0,-0.5 13,4 M1,17.0 Q7.0,21.5 13,17.0" fill="none" stroke="#f28a1e" stroke-width="1.3"/></svg>
<div class="a tx" style="left:455.2px;width:20px;text-align:center;top:700.8px;font-size:12px;font-weight:bold;color:#f28a1e;transform:scaleX(1.0)">4</div>
<svg class="a" style="left:478.5px;top:695.8px" width="14" height="21.0"><path d="M1,4 Q7.0,-0.5 13,4 M1,17.0 Q7.0,21.5 13,17.0" fill="none" stroke="#f28a1e" stroke-width="1.3"/></svg>
<div class="a tx" style="left:475.5px;width:20px;text-align:center;top:700.8px;font-size:12px;font-weight:bold;color:#f28a1e;transform:scaleX(1.0)">3</div>
<svg class="a" style="left:520.8px;top:695.8px" width="14" height="21.0"><path d="M1,4 Q7.0,-0.5 13,4 M1,17.0 Q7.0,21.5 13,17.0" fill="none" stroke="#f28a1e" stroke-width="1.3"/></svg>
<div class="a tx" style="left:517.8px;width:20px;text-align:center;top:700.8px;font-size:12px;font-weight:bold;color:#f28a1e;transform:scaleX(1.0)">1</div>
<div class="a" style="left:501px;top:651.9px;width:11px;height:21px;background:#000;border-radius:5.5px/7px"></div>
<div class="a" style="left:501px;top:696px;width:11px;height:21px;background:#000;border-radius:5.5px/7px"></div>
<div class="a" style="left:458px;top:681.5px;width:78px;height:1.6px;background:#f6a040"></div>
<div class="a btn" style="left:548px;top:680px;width:57px;height:23px"><div class="tx" style="position:absolute;left:0;right:0;top:5px;text-align:center;font-size:12px">クリア</div></div>
<div class="a btn" style="left:548px;top:706px;width:57px;height:23px"><div class="tx" style="position:absolute;left:0;right:0;top:5px;text-align:center;font-size:12px">購入</div></div>
<div class="a btn" style="left:621px;top:598px;width:82px;height:23px"><div class="tx" style="position:absolute;left:0;right:0;top:5px;text-align:center;font-size:12px">一般</div></div>
<div class="a btn" style="left:621px;top:626px;width:82px;height:23px"><div class="tx" style="position:absolute;left:0;right:0;top:5px;text-align:center;font-size:12px">ボックス</div></div>
<div class="a btn" style="left:621px;top:655px;width:82px;height:23px"><div class="tx" style="position:absolute;left:0;right:0;top:5px;text-align:center;font-size:12px">流し</div></div>
<div class="a btn" style="left:621px;top:684px;width:82px;height:23px"><div class="tx" style="position:absolute;left:0;right:0;top:5px;text-align:center;font-size:12px">馬単</div></div>
<div class="a btn" style="left:621px;top:712px;width:82px;height:23px"><div class="tx" style="position:absolute;left:0;right:0;top:5px;text-align:center;font-size:12px">馬単流し</div></div>
<div class="a" style="left:716px;top:586px;width:193px;height:161px;background:repeating-linear-gradient(180deg,#52200c 0 3px,#5c2810 3px 5px,#4a1a08 5px 9px,#56220c 9px 12px)"></div>
<div class="a" style="left:716px;top:586px;width:193px;height:1px;background:repeating-linear-gradient(90deg,#a87050 0 5px,#5a2a10 5px 7px,#b88060 7px 12px,#6a3418 12px 13px,#a06848 13px 19px,#4a1a08 19px 21px,#b07858 21px 29px)"></div>
<div class="a" style="left:717px;top:587px;width:191px;height:1px;background:repeating-linear-gradient(90deg,#4a1a08 0 6px,#7a4428 6px 7px,#3a1204 7px 13px,#8a5434 13px 14px,#5a2410 14px 22px,#6a3418 22px 23px,#3a1204 23px 31px)"></div>
<div class="a" style="left:716px;top:745px;width:193px;height:2px;background:repeating-linear-gradient(90deg,#4a1a08 0 6px,#7a4428 6px 7px,#3a1204 7px 13px,#8a5434 13px 14px,#5a2410 14px 22px,#6a3418 22px 23px,#3a1204 23px 31px)"></div>
<div class="a" style="left:716px;top:586px;width:1px;height:161px;background:repeating-linear-gradient(180deg,#a87050 0 5px,#5a2a10 5px 7px,#b88060 7px 12px,#6a3418 12px 13px,#a06848 13px 19px,#4a1a08 19px 21px,#b07858 21px 29px)"></div>
<div class="a" style="left:717px;top:587px;width:1px;height:159px;background:repeating-linear-gradient(180deg,#4a1a08 0 6px,#7a4428 6px 7px,#3a1204 7px 13px,#8a5434 13px 14px,#5a2410 14px 22px,#6a3418 22px 23px,#3a1204 23px 31px)"></div>
<div class="a" style="left:907px;top:586px;width:2px;height:161px;background:repeating-linear-gradient(180deg,#4a1a08 0 6px,#7a4428 6px 7px,#3a1204 7px 13px,#8a5434 13px 14px,#5a2410 14px 22px,#6a3418 22px 23px,#3a1204 23px 31px)"></div>
<div class="a" style="left:723px;top:623px;width:181px;height:116px;background:#FBEFB8;box-shadow:0 0 0 1px #3a1005"></div>
<div class="a tx" style="left:724px;top:593px;color:#fff">馬券履歴</div>
<div class="a tx" style="left:724px;top:608px;color:#fff">限度</div>
<div class="a tx" style="left:763px;top:608px;color:#fff;letter-spacing:-0.4px">残り29点</div>
<div class="a tx" style="left:817px;top:608px;color:#fff;letter-spacing:-0.8px">残り270万</div>
<div class="a tx" style="left:738px;top:628px;color:#000">単勝</div>
<div class="a tx" style="left:795px;top:628px;color:#000;font-size:12px">1</div>
<div class="a tx" style="left:827px;top:628px;color:#000">30万</div>
<div class="a" style="left:918px;top:593px;width:82px;height:24px;background:linear-gradient(#404040,#1a1a1a);border:1px solid #0a0a0a;box-shadow:inset 0 0 0 1.5px #9c9ca4;border-radius:3px"><div class="tx" style="position:absolute;left:0;right:0;top:5px;text-align:center;color:#a0a0a0;font-size:12px">＜前のレース</div></div>
<div class="a btn" style="left:918px;top:618px;width:82px;height:23px"><div class="tx" style="position:absolute;left:0;right:0;top:5px;text-align:center;font-size:12px">次のレース＞</div></div>
<div class="a tx" style="left:935px;top:667px;font-size:10.5px;color:#000;font-weight:bold;letter-spacing:-0.6px">00:00:00</div>
<div class="a btn" style="left:926px;top:705px;width:58px;height:24px"><div class="tx" style="position:absolute;left:0;right:0;top:5px;text-align:center;font-size:12px">閉じる</div></div>
</body></html>
